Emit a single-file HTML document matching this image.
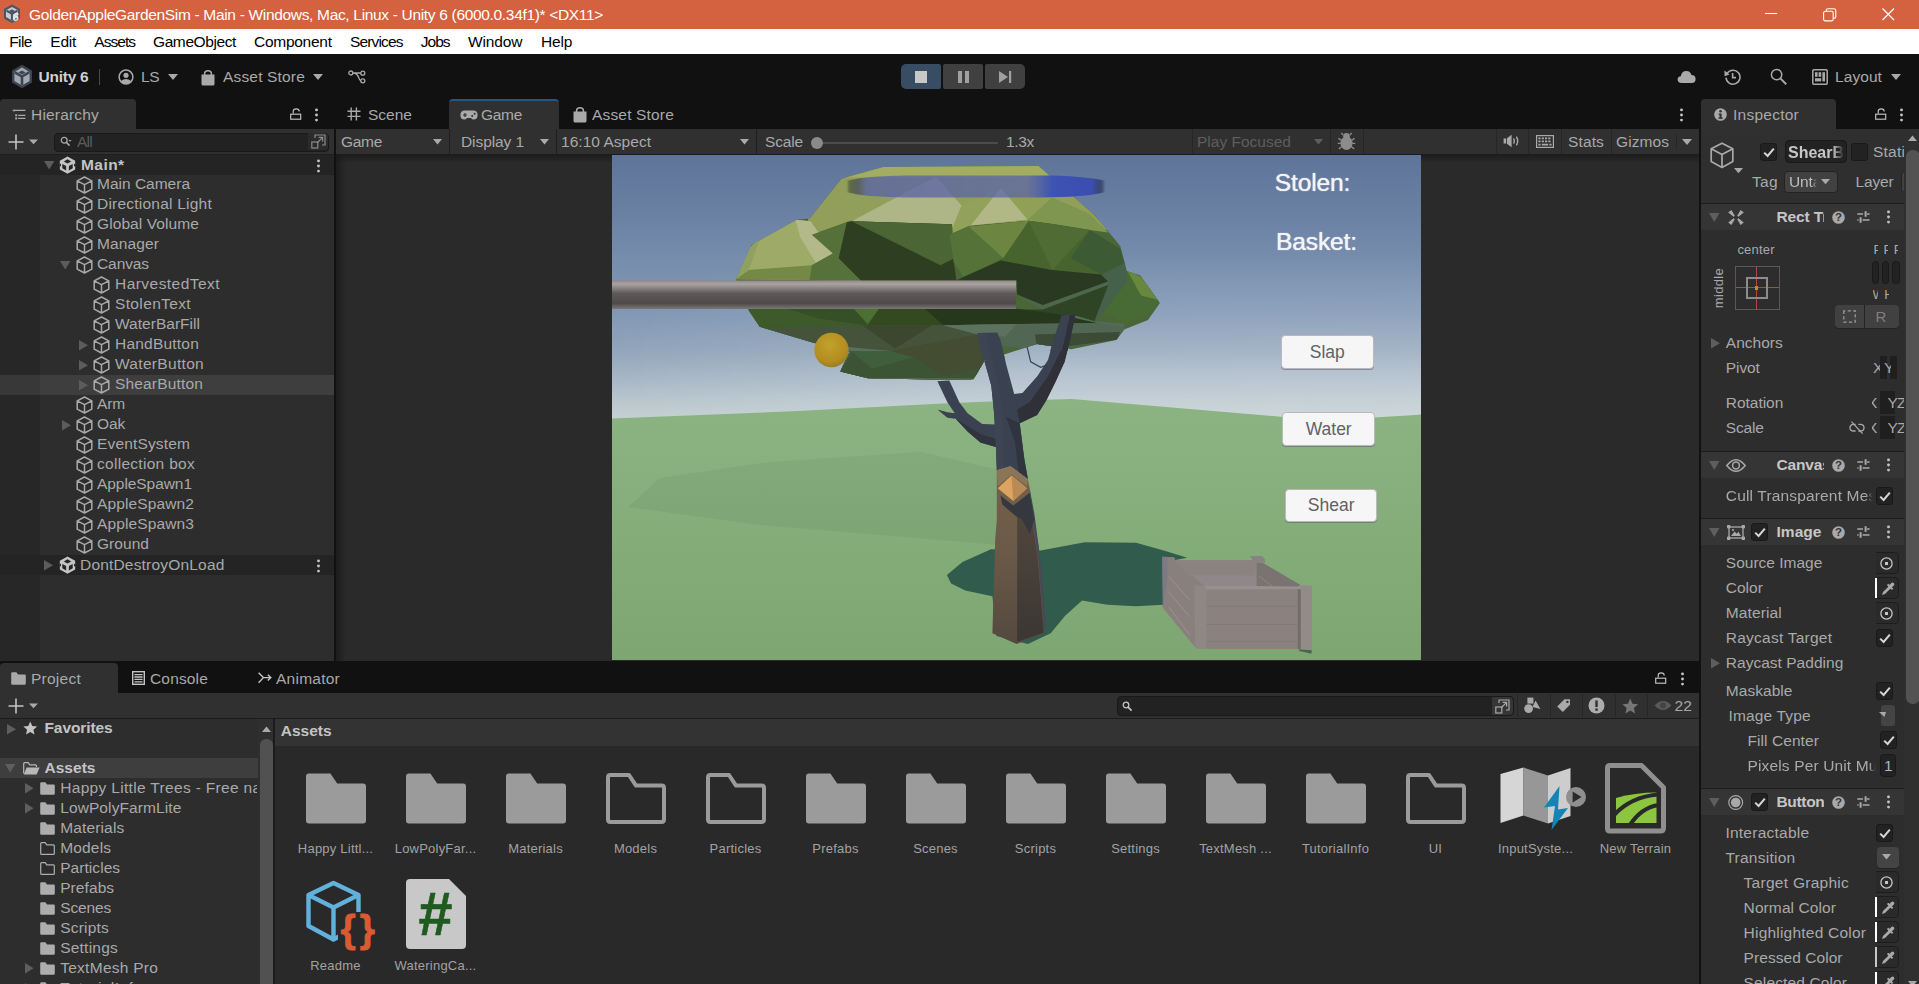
<!DOCTYPE html>
<html lang="en"><head><meta charset="utf-8"><title>GoldenAppleGardenSim - Unity 6</title><style>
html,body{margin:0;padding:0}
body{width:1919px;height:984px;overflow:hidden;background:#111111;position:relative;font-family:"Liberation Sans",sans-serif;font-size:15.5px;color:#a9a9a9}
.a{position:absolute;box-sizing:border-box}
.t{white-space:pre}
svg{overflow:visible}
</style></head><body>
<div class="a" style="left:0px;top:0px;width:1919px;height:29px;background:#d4613f;"></div>
<svg class="a" style="left:3px;top:4px;" width="20" height="20" viewBox="0 0 20 20"><polygon points="9,0.5 17,5 17,14.5 9,19 1,14.5 1,5" fill="#4a5560"/><polygon points="9,3 15,6.3 15,13 9,16.5 3,13 3,6.3" fill="#c9cdd2"/><path d="M9 9.7 L9 16 M9 9.7 L3.5 6.6 M9 9.7 L14.5 6.6" stroke="#4a5560" stroke-width="2.2" fill="none"/><polygon points="9,5.2 12,7 9,8.8 6,7" fill="#4a5560"/></svg>
<div class="a t" style="left:12.5px;top:10.5px;line-height:13px;height:13px;font-size:11px;color:#e8e8e8;font-weight:700;font-style:italic;">6</div>
<div class="a t" style="left:29px;top:0px;line-height:29px;height:29px;font-size:15.5px;color:#ffffff;letter-spacing:-0.323px;">GoldenAppleGardenSim - Main - Windows, Mac, Linux - Unity 6 (6000.0.34f1)* &lt;DX11&gt;</div>
<svg class="a" style="left:1765px;top:7px;" width="14" height="12" viewBox="0 0 14 12"><path d="M0 6.5 H12.2" stroke="#fff" stroke-width="1.1"/></svg>
<svg class="a" style="left:1823px;top:8px;" width="13" height="13" viewBox="0 0 13 13"><rect x="0.6" y="3.3" width="9.6" height="9.6" rx="1.6" fill="none" stroke="#fff" stroke-width="1.1"/><path d="M3.2 3.2 V2.4 Q3.2 0.7 4.9 0.7 H10.8 Q12.8 0.7 12.8 2.7 V8.6 Q12.8 10.3 11.1 10.3 H10.4" fill="none" stroke="#fff" stroke-width="1.1"/></svg>
<svg class="a" style="left:1882px;top:8px;" width="13" height="13" viewBox="0 0 13 13"><path d="M0.5 0.5 L12 12 M12 0.5 L0.5 12" stroke="#fff" stroke-width="1.2"/></svg>
<div class="a" style="left:0px;top:29px;width:1919px;height:25px;background:#ffffff;"></div>
<div class="a t" style="left:9.3px;top:29px;line-height:25px;height:25px;font-size:15.5px;color:#000000;letter-spacing:-0.646px;">File</div>
<div class="a t" style="left:50.3px;top:29px;line-height:25px;height:25px;font-size:15.5px;color:#000000;letter-spacing:-0.255px;">Edit</div>
<div class="a t" style="left:94.3px;top:29px;line-height:25px;height:25px;font-size:15.5px;color:#000000;letter-spacing:-0.969px;">Assets</div>
<div class="a t" style="left:153px;top:29px;line-height:25px;height:25px;font-size:15.5px;color:#000000;letter-spacing:-0.402px;">GameObject</div>
<div class="a t" style="left:254px;top:29px;line-height:25px;height:25px;font-size:15.5px;color:#000000;letter-spacing:-0.271px;">Component</div>
<div class="a t" style="left:350px;top:29px;line-height:25px;height:25px;font-size:15.5px;color:#000000;letter-spacing:-0.842px;">Services</div>
<div class="a t" style="left:420.7px;top:29px;line-height:25px;height:25px;font-size:15.5px;color:#000000;letter-spacing:-0.938px;">Jobs</div>
<div class="a t" style="left:468px;top:29px;line-height:25px;height:25px;font-size:15.5px;color:#000000;letter-spacing:-0.140px;">Window</div>
<div class="a t" style="left:541px;top:29px;line-height:25px;height:25px;font-size:15.5px;color:#000000;letter-spacing:-0.148px;">Help</div>
<div class="a" style="left:0px;top:54px;width:1919px;height:45px;background:#111111;"></div>
<svg class="a" style="left:11px;top:64px;" width="22" height="25" viewBox="0 0 22 25"><polygon points="11,0.8 21,6.5 21,18.5 11,24.2 1,18.5 1,6.5" fill="#3b4450"/><polygon points="11,3.6 18.6,8 18.6,17 11,21.4 3.4,17 3.4,8" fill="#a3a9b0"/><path d="M11 12.5 V21 M11 12.5 L3.8 8.3 M11 12.5 L18.2 8.3" stroke="#3b4450" stroke-width="2.6" fill="none"/><polygon points="11,6.4 14.6,8.5 11,10.6 7.4,8.5" fill="#3b4450"/></svg>
<div class="a t" style="left:38.5px;top:67px;line-height:20px;height:20px;font-size:15.5px;color:#d0d0d0;letter-spacing:-0.241px;font-weight:700;">Unity 6</div>
<div class="a" style="left:99px;top:69px;width:1px;height:16px;background:#4a4a4a;"></div>
<svg class="a" style="left:118px;top:69px;" width="16" height="16" viewBox="0 0 16 16"><circle cx="8" cy="8" r="6.9" fill="none" stroke="#a9a9a9" stroke-width="1.5"/><circle cx="8" cy="6.3" r="2.6" fill="#a9a9a9"/><path d="M2.6 12.3 Q8 7.5 13.4 12.3 Q8 17 2.6 12.3Z" fill="#a9a9a9"/></svg>
<div class="a t" style="left:141px;top:67px;line-height:20px;height:20px;font-size:15.5px;color:#a9a9a9;letter-spacing:-0.484px;">LS</div>
<svg class="a" style="left:167.5px;top:74px;" width="10" height="6" viewBox="0 0 10 6"><polygon points="0,0 10,0 5,6" fill="#a9a9a9"/></svg>
<svg class="a" style="left:201px;top:69.5px;" width="14" height="16" viewBox="0 0 14 16"><path d="M3.6 5 V3.6 Q3.6 0.8 7 0.8 Q10.4 0.8 10.4 3.6 V5" fill="none" stroke="#a9a9a9" stroke-width="1.5"/><path d="M0.5 4.6 H13.5 V14 Q13.5 15.5 12 15.5 H2 Q0.5 15.5 0.5 14 Z" fill="#a9a9a9"/></svg>
<div class="a t" style="left:223px;top:67px;line-height:20px;height:20px;font-size:15.5px;color:#a9a9a9;letter-spacing:0.170px;">Asset Store</div>
<svg class="a" style="left:313px;top:74px;" width="10" height="6" viewBox="0 0 10 6"><polygon points="0,0 10,0 5,6" fill="#a9a9a9"/></svg>
<svg class="a" style="left:348px;top:69.7px;" width="18" height="14" viewBox="0 0 18 14"><circle cx="2.8" cy="3" r="2" fill="none" stroke="#a9a9a9" stroke-width="1.3"/><circle cx="14.8" cy="3.2" r="2" fill="none" stroke="#a9a9a9" stroke-width="1.3"/><circle cx="14.8" cy="10.8" r="2" fill="none" stroke="#a9a9a9" stroke-width="1.3"/><path d="M4.8 3 H12.8 M6 3 Q9 3.5 10.5 7 Q11.5 10.4 12.8 10.8" fill="none" stroke="#a9a9a9" stroke-width="1.3"/></svg>
<div class="a" style="left:901px;top:64px;width:40px;height:25px;background:#384c64;border-radius:5px 2px 2px 5px;"></div>
<div class="a" style="left:943px;top:64px;width:40px;height:25px;background:#404040;border-radius:2px;"></div>
<div class="a" style="left:985px;top:64px;width:40px;height:25px;background:#404040;border-radius:2px 5px 5px 2px;"></div>
<div class="a" style="left:915px;top:71px;width:12px;height:12px;background:#c8c8c8;"></div>
<div class="a" style="left:958px;top:71px;width:4px;height:12px;background:#a0a0a0;"></div>
<div class="a" style="left:965px;top:71px;width:4px;height:12px;background:#a0a0a0;"></div>
<svg class="a" style="left:999px;top:71px;" width="13" height="12" viewBox="0 0 13 12"><polygon points="0,0 9,6 0,12" fill="#a0a0a0"/><rect x="10" y="0" width="2.2" height="12" fill="#a0a0a0"/></svg>
<svg class="a" style="left:1677px;top:70px;" width="20" height="14" viewBox="0 0 20 14"><path d="M4.6 13 Q0.6 13 0.6 9.6 Q0.6 6.6 3.8 6.2 Q4.6 1 9.4 1 Q13.4 1 14.4 5 Q18.6 5 18.6 9 Q18.6 13 14.8 13 Z" fill="#a9a9a9"/></svg>
<svg class="a" style="left:1724px;top:68px;" width="18" height="18" viewBox="0 0 18 18"><path d="M3.2 5.2 A7 7 0 1 1 2 9.6" fill="none" stroke="#a9a9a9" stroke-width="1.5"/><polygon points="0.4,2.6 5.6,6.6 0.6,8.2" fill="#a9a9a9"/><path d="M8.6 5 V9.6 H12" fill="none" stroke="#a9a9a9" stroke-width="1.6"/></svg>
<svg class="a" style="left:1770px;top:68px;" width="18" height="18" viewBox="0 0 18 18"><circle cx="6.6" cy="6.6" r="5.2" fill="none" stroke="#a9a9a9" stroke-width="1.5"/><path d="M10.4 10.4 L16.2 16.2" stroke="#a9a9a9" stroke-width="2"/></svg>
<svg class="a" style="left:1812px;top:69px;" width="16" height="16" viewBox="0 0 16 16"><rect x="0.8" y="0.8" width="14.4" height="14.4" rx="1" fill="none" stroke="#a9a9a9" stroke-width="1.5"/><rect x="3" y="3.2" width="2.6" height="4.6" fill="#a9a9a9"/><rect x="6.6" y="3.2" width="2.6" height="4.6" fill="#a9a9a9"/><rect x="3" y="9.2" width="6.2" height="3.2" fill="#a9a9a9"/><rect x="10.4" y="3.2" width="2.6" height="9.2" fill="#a9a9a9"/></svg>
<div class="a t" style="left:1835px;top:67px;line-height:20px;height:20px;font-size:15.5px;color:#a9a9a9;letter-spacing:0.076px;">Layout</div>
<svg class="a" style="left:1891px;top:74px;" width="10" height="6" viewBox="0 0 10 6"><polygon points="0,0 10,0 5,6" fill="#a9a9a9"/></svg>
<div class="a" style="left:0px;top:99px;width:136px;height:30px;background:#303030;border-radius:4px 4px 0 0;"></div>
<svg class="a" style="left:11.5px;top:109px;" width="14" height="11" viewBox="0 0 14 11"><path d="M2.6 1.4 H13.4 M6.2 6.3 H13.4 M6.2 9.4 H13.4" stroke="#a9a9a9" stroke-width="1.3"/><polygon points="0.2,1.4 2.6,0 2.6,2.8" fill="#a9a9a9"/><rect x="3.2" y="5.3" width="2" height="2" fill="#a9a9a9"/><rect x="3.2" y="8.4" width="2" height="2" fill="#a9a9a9"/></svg>
<div class="a t" style="left:31px;top:105px;line-height:20px;height:20px;font-size:15.5px;color:#a9a9a9;letter-spacing:0.186px;">Hierarchy</div>
<svg class="a" style="left:290px;top:108px;" width="12" height="12" viewBox="0 0 12 12"><path d="M3.2 5.5 V3.4 Q3.2 0.8 6.2 0.8 Q9.2 0.8 9.2 3.4" fill="none" stroke="#c4c4c4" stroke-width="1.15"/><rect x="0.7" y="6.2" width="10" height="5" fill="none" stroke="#c4c4c4" stroke-width="1.15"/></svg>
<svg class="a" style="left:315px;top:107.5px;" width="3" height="14" viewBox="0 0 3 14"><circle cx="1.5" cy="1.9" r="1.45" fill="#c4c4c4"/><circle cx="1.5" cy="7" r="1.45" fill="#c4c4c4"/><circle cx="1.5" cy="12.1" r="1.45" fill="#c4c4c4"/></svg>
<div class="a" style="left:0px;top:129px;width:334px;height:25px;background:#303030;"></div>
<div class="a" style="left:0px;top:154px;width:334px;height:1px;background:#1e1e1e;"></div>
<svg class="a" style="left:8px;top:134px;" width="30" height="16" viewBox="0 0 30 16"><path d="M8 0.5 V15.5 M0.5 8 H15.5" stroke="#c4c4c4" stroke-width="1.6"/><polygon points="21,5.4 30,5.4 25.5,10.2" fill="#a9a9a9"/></svg>
<div class="a" style="left:54px;top:132.5px;width:275px;height:19.5px;background:#222222;border:1px solid #191919;border-radius:4px;"></div>
<svg class="a" style="left:60px;top:136px;" width="12" height="12" viewBox="0 0 12 12"><circle cx="4.2" cy="4.2" r="2.9" fill="none" stroke="#a9a9a9" stroke-width="1.3"/><path d="M6.4 6.4 L9.6 9.6" stroke="#a9a9a9" stroke-width="1.5"/><polygon points="8.4,4 11.6,4 10,5.8" fill="#a9a9a9"/></svg>
<div class="a t" style="left:77px;top:132px;line-height:20px;height:20px;font-size:15.5px;color:#5c5c5c;letter-spacing:-0.745px;">All</div>
<div class="a" style="left:308px;top:133px;width:20px;height:17px;background:#2b2b2b;border-radius:0 3px 3px 0;"></div>
<svg class="a" style="left:311px;top:134px;" width="15" height="15" viewBox="0 0 15 15"><path d="M4 4 V1 H14 V11 H11" fill="none" stroke="#8c8c8c" stroke-width="1.2"/><rect x="0.8" y="8" width="6" height="6" fill="none" stroke="#8c8c8c" stroke-width="1.2"/><path d="M6 9 L11.4 3.6 M7.6 3.4 H11.6 V7.4" fill="none" stroke="#8c8c8c" stroke-width="1.2"/></svg>
<div class="a" style="left:0px;top:155px;width:334px;height:506px;background:#2d2d2d;"></div>
<div class="a" style="left:0px;top:155px;width:40px;height:506px;background:#272727;"></div>
<div class="a" style="left:0px;top:155px;width:334px;height:20px;background:#242424;"></div>
<svg class="a" style="left:43.5px;top:161px;" width="10.4" height="8.6" viewBox="0 0 10.4 8.6"><polygon points="0,0 10.4,0 5.2,8.6" fill="#5c5c5c"/></svg>
<svg class="a" style="left:59px;top:156px;" width="17" height="18" viewBox="0 0 17 18"><polygon points="8.5,0.4 16.2,4.8 16.2,13.4 8.5,17.8 0.8,13.4 0.8,4.8" fill="#c4c4c4"/><g fill="#242424"><polygon points="8.5,3.3 12.2,5.4 8.5,7.5 4.8,5.4"/><polygon points="3.3,7.9 7.1,10.1 7.1,14.4 3.3,12.2"/><polygon points="13.7,7.9 9.9,10.1 9.9,14.4 13.7,12.2"/><polygon points="0.6,7.4 0.6,10.8 2,10 2,8.2"/><polygon points="16.4,7.4 16.4,10.8 15,10 15,8.2"/></g></svg>
<div class="a t" style="left:81px;top:155px;line-height:20px;height:20px;font-size:15.5px;color:#c4c4c4;letter-spacing:0.431px;font-weight:700;">Main*</div>
<svg class="a" style="left:317px;top:158.5px;" width="3" height="14" viewBox="0 0 3 14"><circle cx="1.5" cy="1.9" r="1.45" fill="#c4c4c4"/><circle cx="1.5" cy="7" r="1.45" fill="#c4c4c4"/><circle cx="1.5" cy="12.1" r="1.45" fill="#c4c4c4"/></svg>
<svg class="a" style="left:76px;top:176px;" width="17.0" height="18.0" viewBox="0 0 17 18"><path d="M8.5 1 L15.8 4.8 V13.2 L8.5 17 L1.2 13.2 V4.8 Z M1.2 4.8 L8.5 8.6 L15.8 4.8 M8.5 8.6 V17" fill="none" stroke="#a9a9a9" stroke-width="1.5" stroke-linejoin="round"/></svg>
<div class="a t" style="left:97px;top:174px;line-height:20px;height:20px;font-size:15.5px;color:#a9a9a9;letter-spacing:-0.003px;">Main Camera</div>
<svg class="a" style="left:76px;top:196px;" width="17.0" height="18.0" viewBox="0 0 17 18"><path d="M8.5 1 L15.8 4.8 V13.2 L8.5 17 L1.2 13.2 V4.8 Z M1.2 4.8 L8.5 8.6 L15.8 4.8 M8.5 8.6 V17" fill="none" stroke="#a9a9a9" stroke-width="1.5" stroke-linejoin="round"/></svg>
<div class="a t" style="left:97px;top:194px;line-height:20px;height:20px;font-size:15.5px;color:#a9a9a9;letter-spacing:0.226px;">Directional Light</div>
<svg class="a" style="left:76px;top:216px;" width="17.0" height="18.0" viewBox="0 0 17 18"><path d="M8.5 1 L15.8 4.8 V13.2 L8.5 17 L1.2 13.2 V4.8 Z M1.2 4.8 L8.5 8.6 L15.8 4.8 M8.5 8.6 V17" fill="none" stroke="#a9a9a9" stroke-width="1.5" stroke-linejoin="round"/></svg>
<div class="a t" style="left:97px;top:214px;line-height:20px;height:20px;font-size:15.5px;color:#a9a9a9;letter-spacing:0.091px;">Global Volume</div>
<svg class="a" style="left:76px;top:236px;" width="17.0" height="18.0" viewBox="0 0 17 18"><path d="M8.5 1 L15.8 4.8 V13.2 L8.5 17 L1.2 13.2 V4.8 Z M1.2 4.8 L8.5 8.6 L15.8 4.8 M8.5 8.6 V17" fill="none" stroke="#a9a9a9" stroke-width="1.5" stroke-linejoin="round"/></svg>
<div class="a t" style="left:97px;top:234px;line-height:20px;height:20px;font-size:15.5px;color:#a9a9a9;letter-spacing:0.116px;">Manager</div>
<svg class="a" style="left:60px;top:260.5px;" width="10.4" height="8.6" viewBox="0 0 10.4 8.6"><polygon points="0,0 10.4,0 5.2,8.6" fill="#5c5c5c"/></svg>
<svg class="a" style="left:76px;top:256px;" width="17.0" height="18.0" viewBox="0 0 17 18"><path d="M8.5 1 L15.8 4.8 V13.2 L8.5 17 L1.2 13.2 V4.8 Z M1.2 4.8 L8.5 8.6 L15.8 4.8 M8.5 8.6 V17" fill="none" stroke="#a9a9a9" stroke-width="1.5" stroke-linejoin="round"/></svg>
<div class="a t" style="left:97px;top:254px;line-height:20px;height:20px;font-size:15.5px;color:#a9a9a9;letter-spacing:-0.094px;">Canvas</div>
<svg class="a" style="left:93px;top:276px;" width="17.0" height="18.0" viewBox="0 0 17 18"><path d="M8.5 1 L15.8 4.8 V13.2 L8.5 17 L1.2 13.2 V4.8 Z M1.2 4.8 L8.5 8.6 L15.8 4.8 M8.5 8.6 V17" fill="none" stroke="#a9a9a9" stroke-width="1.5" stroke-linejoin="round"/></svg>
<div class="a t" style="left:115px;top:274px;line-height:20px;height:20px;font-size:15.5px;color:#a9a9a9;letter-spacing:0.456px;">HarvestedText</div>
<svg class="a" style="left:93px;top:296px;" width="17.0" height="18.0" viewBox="0 0 17 18"><path d="M8.5 1 L15.8 4.8 V13.2 L8.5 17 L1.2 13.2 V4.8 Z M1.2 4.8 L8.5 8.6 L15.8 4.8 M8.5 8.6 V17" fill="none" stroke="#a9a9a9" stroke-width="1.5" stroke-linejoin="round"/></svg>
<div class="a t" style="left:115px;top:294px;line-height:20px;height:20px;font-size:15.5px;color:#a9a9a9;letter-spacing:0.361px;">StolenText</div>
<svg class="a" style="left:93px;top:316px;" width="17.0" height="18.0" viewBox="0 0 17 18"><path d="M8.5 1 L15.8 4.8 V13.2 L8.5 17 L1.2 13.2 V4.8 Z M1.2 4.8 L8.5 8.6 L15.8 4.8 M8.5 8.6 V17" fill="none" stroke="#a9a9a9" stroke-width="1.5" stroke-linejoin="round"/></svg>
<div class="a t" style="left:115px;top:314px;line-height:20px;height:20px;font-size:15.5px;color:#a9a9a9;letter-spacing:0.026px;">WaterBarFill</div>
<svg class="a" style="left:79px;top:339.5px;" width="9" height="10.4" viewBox="0 0 9 10.4"><polygon points="0,0 9,5.2 0,10.4" fill="#5c5c5c"/></svg>
<svg class="a" style="left:93px;top:336px;" width="17.0" height="18.0" viewBox="0 0 17 18"><path d="M8.5 1 L15.8 4.8 V13.2 L8.5 17 L1.2 13.2 V4.8 Z M1.2 4.8 L8.5 8.6 L15.8 4.8 M8.5 8.6 V17" fill="none" stroke="#a9a9a9" stroke-width="1.5" stroke-linejoin="round"/></svg>
<div class="a t" style="left:115px;top:334px;line-height:20px;height:20px;font-size:15.5px;color:#a9a9a9;letter-spacing:0.212px;">HandButton</div>
<svg class="a" style="left:79px;top:359.5px;" width="9" height="10.4" viewBox="0 0 9 10.4"><polygon points="0,0 9,5.2 0,10.4" fill="#5c5c5c"/></svg>
<svg class="a" style="left:93px;top:356px;" width="17.0" height="18.0" viewBox="0 0 17 18"><path d="M8.5 1 L15.8 4.8 V13.2 L8.5 17 L1.2 13.2 V4.8 Z M1.2 4.8 L8.5 8.6 L15.8 4.8 M8.5 8.6 V17" fill="none" stroke="#a9a9a9" stroke-width="1.5" stroke-linejoin="round"/></svg>
<div class="a t" style="left:115px;top:354px;line-height:20px;height:20px;font-size:15.5px;color:#a9a9a9;letter-spacing:0.311px;">WaterButton</div>
<div class="a" style="left:0px;top:375px;width:334px;height:20px;background:#3e3e3e;"></div>
<div class="a" style="left:0px;top:375px;width:40px;height:20px;background:#383838;"></div>
<svg class="a" style="left:79px;top:379.5px;" width="9" height="10.4" viewBox="0 0 9 10.4"><polygon points="0,0 9,5.2 0,10.4" fill="#5c5c5c"/></svg>
<svg class="a" style="left:93px;top:376px;" width="17.0" height="18.0" viewBox="0 0 17 18"><path d="M8.5 1 L15.8 4.8 V13.2 L8.5 17 L1.2 13.2 V4.8 Z M1.2 4.8 L8.5 8.6 L15.8 4.8 M8.5 8.6 V17" fill="none" stroke="#a9a9a9" stroke-width="1.5" stroke-linejoin="round"/></svg>
<div class="a t" style="left:115px;top:374px;line-height:20px;height:20px;font-size:15.5px;color:#a9a9a9;letter-spacing:0.165px;">ShearButton</div>
<svg class="a" style="left:76px;top:396px;" width="17.0" height="18.0" viewBox="0 0 17 18"><path d="M8.5 1 L15.8 4.8 V13.2 L8.5 17 L1.2 13.2 V4.8 Z M1.2 4.8 L8.5 8.6 L15.8 4.8 M8.5 8.6 V17" fill="none" stroke="#a9a9a9" stroke-width="1.5" stroke-linejoin="round"/></svg>
<div class="a t" style="left:97px;top:394px;line-height:20px;height:20px;font-size:15.5px;color:#a9a9a9;letter-spacing:-0.141px;">Arm</div>
<svg class="a" style="left:62px;top:419.5px;" width="9" height="10.4" viewBox="0 0 9 10.4"><polygon points="0,0 9,5.2 0,10.4" fill="#5c5c5c"/></svg>
<svg class="a" style="left:76px;top:416px;" width="17.0" height="18.0" viewBox="0 0 17 18"><path d="M8.5 1 L15.8 4.8 V13.2 L8.5 17 L1.2 13.2 V4.8 Z M1.2 4.8 L8.5 8.6 L15.8 4.8 M8.5 8.6 V17" fill="none" stroke="#a9a9a9" stroke-width="1.5" stroke-linejoin="round"/></svg>
<div class="a t" style="left:97px;top:414px;line-height:20px;height:20px;font-size:15.5px;color:#a9a9a9;letter-spacing:-0.146px;">Oak</div>
<svg class="a" style="left:76px;top:436px;" width="17.0" height="18.0" viewBox="0 0 17 18"><path d="M8.5 1 L15.8 4.8 V13.2 L8.5 17 L1.2 13.2 V4.8 Z M1.2 4.8 L8.5 8.6 L15.8 4.8 M8.5 8.6 V17" fill="none" stroke="#a9a9a9" stroke-width="1.5" stroke-linejoin="round"/></svg>
<div class="a t" style="left:97px;top:434px;line-height:20px;height:20px;font-size:15.5px;color:#a9a9a9;letter-spacing:0.153px;">EventSystem</div>
<svg class="a" style="left:76px;top:456px;" width="17.0" height="18.0" viewBox="0 0 17 18"><path d="M8.5 1 L15.8 4.8 V13.2 L8.5 17 L1.2 13.2 V4.8 Z M1.2 4.8 L8.5 8.6 L15.8 4.8 M8.5 8.6 V17" fill="none" stroke="#a9a9a9" stroke-width="1.5" stroke-linejoin="round"/></svg>
<div class="a t" style="left:97px;top:454px;line-height:20px;height:20px;font-size:15.5px;color:#a9a9a9;letter-spacing:0.291px;">collection box</div>
<svg class="a" style="left:76px;top:476px;" width="17.0" height="18.0" viewBox="0 0 17 18"><path d="M8.5 1 L15.8 4.8 V13.2 L8.5 17 L1.2 13.2 V4.8 Z M1.2 4.8 L8.5 8.6 L15.8 4.8 M8.5 8.6 V17" fill="none" stroke="#a9a9a9" stroke-width="1.5" stroke-linejoin="round"/></svg>
<div class="a t" style="left:97px;top:474px;line-height:20px;height:20px;font-size:15.5px;color:#a9a9a9;letter-spacing:-0.061px;">AppleSpawn1</div>
<svg class="a" style="left:76px;top:496px;" width="17.0" height="18.0" viewBox="0 0 17 18"><path d="M8.5 1 L15.8 4.8 V13.2 L8.5 17 L1.2 13.2 V4.8 Z M1.2 4.8 L8.5 8.6 L15.8 4.8 M8.5 8.6 V17" fill="none" stroke="#a9a9a9" stroke-width="1.5" stroke-linejoin="round"/></svg>
<div class="a t" style="left:97px;top:494px;line-height:20px;height:20px;font-size:15.5px;color:#a9a9a9;letter-spacing:0.121px;">AppleSpawn2</div>
<svg class="a" style="left:76px;top:516px;" width="17.0" height="18.0" viewBox="0 0 17 18"><path d="M8.5 1 L15.8 4.8 V13.2 L8.5 17 L1.2 13.2 V4.8 Z M1.2 4.8 L8.5 8.6 L15.8 4.8 M8.5 8.6 V17" fill="none" stroke="#a9a9a9" stroke-width="1.5" stroke-linejoin="round"/></svg>
<div class="a t" style="left:97px;top:514px;line-height:20px;height:20px;font-size:15.5px;color:#a9a9a9;letter-spacing:0.121px;">AppleSpawn3</div>
<svg class="a" style="left:76px;top:536px;" width="17.0" height="18.0" viewBox="0 0 17 18"><path d="M8.5 1 L15.8 4.8 V13.2 L8.5 17 L1.2 13.2 V4.8 Z M1.2 4.8 L8.5 8.6 L15.8 4.8 M8.5 8.6 V17" fill="none" stroke="#a9a9a9" stroke-width="1.5" stroke-linejoin="round"/></svg>
<div class="a t" style="left:97px;top:534px;line-height:20px;height:20px;font-size:15.5px;color:#a9a9a9;letter-spacing:0.049px;">Ground</div>
<div class="a" style="left:0px;top:555px;width:334px;height:20px;background:#242424;"></div>
<svg class="a" style="left:44px;top:560px;" width="9" height="10.4" viewBox="0 0 9 10.4"><polygon points="0,0 9,5.2 0,10.4" fill="#5c5c5c"/></svg>
<svg class="a" style="left:59px;top:556px;" width="17" height="18" viewBox="0 0 17 18"><polygon points="8.5,0.4 16.2,4.8 16.2,13.4 8.5,17.8 0.8,13.4 0.8,4.8" fill="#c4c4c4"/><g fill="#242424"><polygon points="8.5,3.3 12.2,5.4 8.5,7.5 4.8,5.4"/><polygon points="3.3,7.9 7.1,10.1 7.1,14.4 3.3,12.2"/><polygon points="13.7,7.9 9.9,10.1 9.9,14.4 13.7,12.2"/><polygon points="0.6,7.4 0.6,10.8 2,10 2,8.2"/><polygon points="16.4,7.4 16.4,10.8 15,10 15,8.2"/></g></svg>
<div class="a t" style="left:80px;top:555px;line-height:20px;height:20px;font-size:15.5px;color:#a9a9a9;letter-spacing:0.188px;">DontDestroyOnLoad</div>
<svg class="a" style="left:317px;top:558.5px;" width="3" height="14" viewBox="0 0 3 14"><circle cx="1.5" cy="1.9" r="1.45" fill="#c4c4c4"/><circle cx="1.5" cy="7" r="1.45" fill="#c4c4c4"/><circle cx="1.5" cy="12.1" r="1.45" fill="#c4c4c4"/></svg>
<svg class="a" style="left:347px;top:107px;" width="14" height="14" viewBox="0 0 14 14"><path d="M4.2 0.5 V13.5 M9.4 0.5 V13.5 M0.5 4.2 H13.5 M0.5 9.4 H13.5" stroke="#a9a9a9" stroke-width="1.4"/></svg>
<div class="a t" style="left:368px;top:105px;line-height:20px;height:20px;font-size:15.5px;color:#a9a9a9;letter-spacing:0.009px;">Scene</div>
<div class="a" style="left:449px;top:99px;width:110px;height:30px;background:#303030;border-radius:4px 4px 0 0;border-top:2px solid #2a5580;"></div>
<svg class="a" style="left:460px;top:110px;" width="18" height="10" viewBox="0 0 18 10"><path d="M4.6 0.4 H13.4 Q17.6 0.4 17.6 5 Q17.6 9.6 13.6 9.6 Q12 9.6 11 8 H7 Q6 9.6 4.4 9.6 Q0.4 9.6 0.4 5 Q0.4 0.4 4.6 0.4Z" fill="#a9a9a9"/><path d="M3 5 H7 M5 3 V7" stroke="#303030" stroke-width="1.2"/><circle cx="12.2" cy="6" r="1" fill="#303030"/><circle cx="14.6" cy="3.8" r="1" fill="#303030"/></svg>
<div class="a t" style="left:481px;top:105px;line-height:20px;height:20px;font-size:15.5px;color:#a9a9a9;letter-spacing:-0.305px;">Game</div>
<svg class="a" style="left:573px;top:107px;" width="14" height="16" viewBox="0 0 14 16"><path d="M3.6 5 V3.6 Q3.6 0.8 7 0.8 Q10.4 0.8 10.4 3.6 V5" fill="none" stroke="#a9a9a9" stroke-width="1.5"/><path d="M0.5 4.6 H13.5 V14 Q13.5 15.5 12 15.5 H2 Q0.5 15.5 0.5 14 Z" fill="#a9a9a9"/></svg>
<div class="a t" style="left:592px;top:105px;line-height:20px;height:20px;font-size:15.5px;color:#a9a9a9;letter-spacing:0.170px;">Asset Store</div>
<svg class="a" style="left:1680px;top:107.5px;" width="3" height="14" viewBox="0 0 3 14"><circle cx="1.5" cy="1.9" r="1.45" fill="#c4c4c4"/><circle cx="1.5" cy="7" r="1.45" fill="#c4c4c4"/><circle cx="1.5" cy="12.1" r="1.45" fill="#c4c4c4"/></svg>
<div class="a" style="left:336px;top:129px;width:1363px;height:25px;background:#303030;"></div>
<div class="a" style="left:336px;top:154px;width:1363px;height:1px;background:#1c1c1c;"></div>
<div class="a t" style="left:341px;top:132px;line-height:20px;height:20px;font-size:15.5px;color:#a9a9a9;letter-spacing:-0.305px;">Game</div>
<svg class="a" style="left:433px;top:139px;" width="9" height="6" viewBox="0 0 9 6"><polygon points="0,0 9,0 4.5,5.5" fill="#a9a9a9"/></svg>
<div class="a" style="left:449px;top:129px;width:1px;height:25px;background:#1f1f1f;"></div>
<div class="a t" style="left:461px;top:132px;line-height:20px;height:20px;font-size:15.5px;color:#a9a9a9;letter-spacing:-0.083px;">Display 1</div>
<svg class="a" style="left:540px;top:139px;" width="9" height="6" viewBox="0 0 9 6"><polygon points="0,0 9,0 4.5,5.5" fill="#a9a9a9"/></svg>
<div class="a" style="left:556px;top:129px;width:1px;height:25px;background:#1f1f1f;"></div>
<div class="a t" style="left:561px;top:132px;line-height:20px;height:20px;font-size:15.5px;color:#a9a9a9;letter-spacing:0.031px;">16:10 Aspect</div>
<svg class="a" style="left:740px;top:139px;" width="9" height="6" viewBox="0 0 9 6"><polygon points="0,0 9,0 4.5,5.5" fill="#a9a9a9"/></svg>
<div class="a" style="left:756px;top:129px;width:1px;height:25px;background:#1f1f1f;"></div>
<div class="a t" style="left:765px;top:132px;line-height:20px;height:20px;font-size:15.5px;color:#a9a9a9;letter-spacing:-0.156px;">Scale</div>
<div class="a" style="left:817px;top:142px;width:181px;height:2px;background:#4c4c4c;border-radius:1px;"></div>
<div class="a" style="left:811px;top:137px;width:12px;height:12px;background:#8a8a8a;border-radius:6px;"></div>
<div class="a t" style="left:1006px;top:132px;line-height:20px;height:20px;font-size:15.5px;color:#a9a9a9;letter-spacing:-0.328px;">1.3x</div>
<div class="a" style="left:1192px;top:129px;width:1px;height:25px;background:#262626;"></div>
<div class="a t" style="left:1197px;top:132px;line-height:20px;height:20px;font-size:15.5px;color:#5e5e5e;letter-spacing:0.007px;">Play Focused</div>
<svg class="a" style="left:1314px;top:139px;" width="9" height="6" viewBox="0 0 9 6"><polygon points="0,0 9,0 4.5,5.5" fill="#5e5e5e"/></svg>
<div class="a" style="left:1330px;top:129px;width:1px;height:25px;background:#262626;"></div>
<svg class="a" style="left:1337px;top:132px;" width="19" height="19" viewBox="0 0 19 19"><ellipse cx="9.5" cy="11.2" rx="6" ry="6.8" fill="#8c8c8c"/><circle cx="9.5" cy="4.4" r="3.3" fill="#8c8c8c"/><path d="M6 3 L4.4 0.8 M13 3 L14.6 0.8 M4.6 8.4 L1.4 6.4 M14.4 8.4 L17.6 6.4 M4.2 11.4 H0.8 M14.8 11.4 H18.2 M4.8 14.4 L1.8 17 M14.2 14.4 L17.2 17" stroke="#8c8c8c" stroke-width="1.3" fill="none"/></svg>
<div class="a" style="left:1363px;top:129px;width:1px;height:25px;background:#262626;"></div>
<div class="a" style="left:1496px;top:129px;width:1px;height:25px;background:#262626;"></div>
<svg class="a" style="left:1503px;top:134px;" width="18" height="14" viewBox="0 0 18 14"><path d="M0.6 4.4 H3.2 V9.6 H0.6Z M4 4.2 L8.6 0.8 V13.2 L4 9.8 Z" fill="#a9a9a9"/><path d="M10.6 4.4 Q12.2 7 10.6 9.6 M13.4 2.6 Q16 7 13.4 11.4" fill="none" stroke="#a9a9a9" stroke-width="1.4"/></svg>
<div class="a" style="left:1528px;top:129px;width:1px;height:25px;background:#262626;"></div>
<svg class="a" style="left:1536px;top:135px;" width="18" height="13" viewBox="0 0 18 13"><rect x="0.6" y="0.6" width="16.8" height="11.8" fill="none" stroke="#a9a9a9" stroke-width="1.2"/><path d="M2.4 3.4 H15.6 M2.4 6.4 H15.6" stroke="#a9a9a9" stroke-width="1.6" stroke-dasharray="2.2 1.1"/><path d="M2.4 9.6 H4.6 M5.8 9.6 H12.2 M13.4 9.6 H15.6" stroke="#a9a9a9" stroke-width="1.6"/></svg>
<div class="a" style="left:1561px;top:129px;width:1px;height:25px;background:#262626;"></div>
<div class="a t" style="left:1568px;top:132px;line-height:20px;height:20px;font-size:15.5px;color:#a9a9a9;letter-spacing:0.134px;">Stats</div>
<div class="a" style="left:1611px;top:129px;width:1px;height:25px;background:#262626;"></div>
<div class="a t" style="left:1616px;top:132px;line-height:20px;height:20px;font-size:15.5px;color:#a9a9a9;letter-spacing:0.076px;">Gizmos</div>
<div class="a" style="left:1676px;top:134px;width:1px;height:15px;background:#262626;"></div>
<svg class="a" style="left:1682px;top:139px;" width="10" height="6" viewBox="0 0 10 6"><polygon points="0,0 10,0 5,6" fill="#a9a9a9"/></svg>
<div class="a" style="left:336px;top:155px;width:1363px;height:506px;background:#2a2a2a;background:linear-gradient(#1d1d1d 0,#2a2a2a 8px);"></div>
<div class="a" style="left:336px;top:155px;width:10px;height:506px;background:transparent;background:linear-gradient(90deg,rgba(24,24,24,.75) 0,rgba(42,42,42,0) 100%);"></div>
<svg class="a" style="left:0px;top:0px;pointer-events:none;" width="1919" height="984" viewBox="0 0 1919 984"><defs><linearGradient id="sky" x1="0" y1="0" x2="0" y2="1"><stop offset="0" stop-color="#5e7599"/><stop offset="0.22" stop-color="#6a81a4"/><stop offset="0.38" stop-color="#768dad"/><stop offset="0.57" stop-color="#8198b4"/><stop offset="0.71" stop-color="#92a5bb"/><stop offset="0.82" stop-color="#a9b8c6"/><stop offset="0.89" stop-color="#b8c6ce"/><stop offset="0.95" stop-color="#c3cfd2"/><stop offset="1" stop-color="#c5d1d3"/></linearGradient><linearGradient id="gnd" x1="0" y1="0" x2="0" y2="1"><stop offset="0" stop-color="#8bb482"/><stop offset="0.5" stop-color="#84ad7a"/><stop offset="1" stop-color="#7da672"/></linearGradient><linearGradient id="arm" x1="0" y1="0" x2="0" y2="1"><stop offset="0" stop-color="#8e8888"/><stop offset="0.12" stop-color="#aaa3a2"/><stop offset="0.45" stop-color="#5f5a5a"/><stop offset="0.8" stop-color="#4e4a4a"/><stop offset="1" stop-color="#7d7676"/></linearGradient><linearGradient id="trunk" x1="0" y1="0" x2="0" y2="1"><stop offset="0" stop-color="#75624d"/><stop offset="0.5" stop-color="#6a5947"/><stop offset="1" stop-color="#54493f"/></linearGradient><linearGradient id="trunk2" x1="0" y1="0" x2="0" y2="1"><stop offset="0" stop-color="#52463d"/><stop offset="1" stop-color="#3b3733"/></linearGradient><radialGradient id="apple" cx="0.45" cy="0.35" r="0.7"><stop offset="0" stop-color="#c2a22b"/><stop offset="0.7" stop-color="#b38d20"/><stop offset="1" stop-color="#94782c"/></radialGradient><linearGradient id="wbar" x1="0" y1="0" x2="1" y2="0"><stop offset="0" stop-color="#3f4438" stop-opacity="0.55"/><stop offset="0.035" stop-color="#474d55" stop-opacity="0.75"/><stop offset="0.075" stop-color="#5a63a6" stop-opacity="0.78"/><stop offset="0.7" stop-color="#5a64aa" stop-opacity="0.72"/><stop offset="0.8" stop-color="#3d52b4"/><stop offset="0.95" stop-color="#3a50b0"/><stop offset="0.985" stop-color="#34406f" stop-opacity="0.9"/><stop offset="1" stop-color="#3a4050" stop-opacity="0.5"/></linearGradient><linearGradient id="skyh" x1="0" y1="0" x2="1" y2="0"><stop offset="0" stop-color="#fff" stop-opacity="0"/><stop offset="0.55" stop-color="#fff" stop-opacity="0.2"/><stop offset="1" stop-color="#fff" stop-opacity="0.22"/></linearGradient><linearGradient id="skyv" x1="0" y1="0" x2="0" y2="1"><stop offset="0" stop-color="#000"/><stop offset="0.35" stop-color="#000"/><stop offset="0.8" stop-color="#fff"/><stop offset="1" stop-color="#bbb"/></linearGradient><mask id="skym" maskUnits="userSpaceOnUse" x="612" y="155" width="809" height="275"><rect x="612" y="155" width="809" height="275" fill="url(#skyv)"/></mask><filter id="b1"><feGaussianBlur stdDeviation="1.3 0.6"/></filter></defs><rect x="612" y="155" width="809" height="275" fill="url(#sky)"/><rect x="612" y="155" width="809" height="275" fill="url(#skyh)" mask="url(#skym)"/><path d="M612 418.6 L798 411 L933 404 Q1010 400.2 1072 399 L1290 417.4 Q1335 421 1421 414.5 V660 H612 Z" fill="url(#gnd)"/><polygon points="628.0,507.0 660.0,478.0 770.0,462.0 920.0,452.0 1000.0,470.0 1000.0,545.0 760.0,525.0" fill="rgba(60,90,60,0.07)" /><polygon points="946.9,574.9 962.5,562.1 991.0,549.3 1039.3,550.7 1084.8,542.2 1136.0,542.7 1164.5,550.7 1187.3,557.8 1164.5,562.1 1163.1,604.8 1136.0,606.2 1107.6,604.8 1082.0,600.5 1064.9,616.1 1050.7,633.2 1027.9,644.0 996.6,636.0 992.4,596.2 965.3,590.5 951.1,583.4" fill="#315b4c" /><polygon points="1061.5,315.4 1075.6,314.3 1070.0,340.0 1064.5,361.9 1055.4,382.1 1046.2,400.4 1037.1,415.0 1019.7,423.2 1006.0,416.8 1014.2,394.0 1022.4,393.0 1037.1,376.6 1048.0,360.1 1053.5,340.0" fill="#3a4150" /><polygon points="1070.0,340.0 1064.5,361.9 1055.4,382.1 1046.2,400.4 1037.1,415.0 1019.7,423.2 1007.8,415.0 1029.7,402.2 1048.0,376.6 1060.8,351.0 1064.5,340.0" fill="#2f3038" /><polygon points="937.4,381.2 949.3,380.6 959.3,402.2 967.6,413.2 982.2,424.1 995.9,424.5 995.9,447.0 980.4,442.4 967.6,431.5 955.7,418.7 947.4,417.7 937.4,409.5 947.4,412.3 954.8,413.2 947.4,402.2" fill="#3a4150" /><polygon points="955.7,418.7 967.6,426.0 982.2,435.1 995.9,438.8 995.9,447.0 980.4,442.4 967.6,431.5" fill="#30343f" /><path d="M1027.0 346.4 L1030.7 361.9 L1040.7 367.4 L1045.3 365.6" stroke="#3a4150" stroke-width="1.2" fill="none"/><polygon points="977.4,333.0 997.3,332.5 1000.5,340.0 1006.0,363.8 1014.2,394.0 1019.7,423.2 1024.3,458.9 1027.9,479.0 1010.5,466.2 996.8,470.2 995.9,446.1 994.1,413.2 991.3,385.7 978.5,340.0" fill="#3a4150" /><polygon points="1006.0,416.8 1019.7,423.2 1024.3,458.9 1027.9,479.0 1018.8,472.6 1015.1,442.4" fill="#30343f" /><polygon points="977.4,333.0 985.0,333.0 986.8,340.0 998.7,385.7 1002.3,416.8 1003.2,468.0 996.8,470.2 995.9,446.1 994.1,413.2 991.3,385.7 978.5,340.0" fill="#3d4555" /><polygon points="996.8,470.2 1010.5,466.2 1027.9,479.0 1029.7,490.0 1034.3,520.0 1039.3,550.7 1044.4,633.2 1016.6,644.0 992.4,633.2 995.2,539.3 996.8,520.0" fill="url(#trunk)" /><polygon points="996.8,470.2 1010.5,466.2 1027.9,479.0 1027.0,486.3 1011.5,474.4 997.7,486.3" fill="#8b7558" /><polygon points="1017.1,507.1 1031.7,514.9 1038.4,565.2 1043.5,632.8 1017.1,641.7" fill="url(#trunk2)" /><polygon points="1029.0,484.7 1032.1,513.8 1038.8,565.2 1044.0,632.8 1046.0,623.8 1041.1,565.2 1034.4,513.8" fill="#474a55" /><polygon points="1000.5,495.5 1013.3,505.5 1029.7,492.7 1034.3,520.0 1029.7,533.9 1022.4,520.0 1015.1,515.6 1002.3,504.6" fill="#363840" /><polygon points="1011.5,475.4 1027.0,488.2 1013.3,501.0 997.7,488.2" fill="#dca45e" /><polygon points="1011.5,475.4 1027.0,488.2 1013.3,501.0" fill="#b98a55" /><clipPath id="fol"><polygon points="883.8,166.9 1038.4,166.1 1095.2,215.8 1120.3,246.1 1126.9,271.2 1140.1,275.2 1159.9,303.0 1148.0,320.1 1124.2,329.4 1116.3,339.9 1071.4,349.2 1037.0,343.9 984.2,361.1 973.6,379.6 931.4,379.6 868.0,378.2 840.2,371.6 849.5,351.8 812.5,342.6 759.6,326.7 749.1,310.9 735.9,279.2 751.7,244.8 796.6,219.7 809.8,218.4 841.5,178.8"/></clipPath><polygon points="883.8,166.9 1038.4,166.1 1095.2,215.8 1120.3,246.1 1126.9,271.2 1140.1,275.2 1159.9,303.0 1148.0,320.1 1124.2,329.4 1116.3,339.9 1071.4,349.2 1037.0,343.9 984.2,361.1 973.6,379.6 931.4,379.6 868.0,378.2 840.2,371.6 849.5,351.8 812.5,342.6 759.6,326.7 749.1,310.9 735.9,279.2 751.7,244.8 796.6,219.7 809.8,218.4 841.5,178.8" fill="#4a6638" /><g clip-path="url(#fol)"><polygon points="800.1,164.7 1047.5,164.7 1108.3,230.1 1028.8,220.8 970.4,225.5 949.4,234.8 952.1,224.3 851.6,220.8 811.8,234.8 807.1,216.1" fill="#929f5a" /><polygon points="842.2,164.7 1040.5,164.7 1049.9,176.4 842.2,177.5" fill="#a3ad62" /><polygon points="936.0,176.6 851.6,221.2 952.1,224.3 949.4,230.1 968.0,213.0" fill="#aeb587" /><polygon points="970.4,225.5 1000.8,187.6 1027.7,219.6" fill="#b2b787" /><polygon points="961.0,206.8 1000.8,187.6 970.4,225.5 949.4,234.8" fill="#93a25b" /><polygon points="1000.8,187.6 1052.2,197.4 1027.7,219.6" fill="#90a057" /><polygon points="1052.2,197.4 1089.6,213.8 1108.3,232.5 1089.6,230.1 1027.7,219.6" fill="#7f9650" /><polygon points="735.8,279.2 748.7,248.8 760.4,237.1 795.5,219.8 810.6,221.2 832.9,253.5 856.2,276.9 860.9,280.4" fill="#9eaa68" /><polygon points="795.5,219.8 810.6,221.2 832.9,253.5 816.5,264.0 800.1,237.1" fill="#b3b98a" /><polygon points="735.8,279.2 748.7,269.9 811.8,265.2 832.9,253.5 860.9,280.4" fill="#748946" /><polygon points="811.8,265.2 832.9,253.5 860.9,280.4 809.5,280.4" fill="#56723a" /><polygon points="735.8,279.2 748.7,248.8 760.4,237.1 748.7,269.9" fill="#8fa060" /><polygon points="811.8,234.8 846.9,221.9 838.7,258.2 832.9,253.5" fill="#56703a" /><polygon points="846.9,221.9 851.6,221.2 952.1,224.3 949.4,234.8 954.0,262.9 956.4,280.4 860.9,280.4 838.7,258.2" fill="#2d3e21" /><polygon points="851.6,221.2 952.1,224.3 954.4,258.2 940.4,265.2" fill="#4b6634" /><polygon points="949.4,234.8 968.1,226.6 1028.8,220.8 1089.6,230.1 1120.0,248.8 1124.7,262.9 1101.3,274.5 1052.2,269.9 1000.8,260.5 963.4,276.9 954.0,262.9" fill="#48642e" /><polygon points="968.1,226.6 1028.8,220.8 1003.1,258.2" fill="#6c8642" /><polygon points="949.4,234.8 968.1,226.6 1003.1,258.2 963.4,276.9 954.0,262.9" fill="#557238" /><polygon points="1028.8,220.8 1089.6,230.1 1052.2,269.9" fill="#506c34" /><polygon points="1089.6,230.1 1120.0,248.8 1124.7,262.9 1101.3,274.5 1070.9,258.2" fill="#3c5a34" /><polygon points="963.4,276.9 1000.8,260.5 1052.2,269.9 1101.3,274.5 1108.3,281.6 1042.9,304.9 1017.1,294.4 1017.1,280.4 956.4,280.4" fill="#2a3a22" /><polygon points="1101.3,274.5 1124.7,262.9 1127.0,281.6 1103.6,311.9 1094.3,321.3 1108.3,281.6" fill="#45614c" /><polygon points="1017.1,295.6 1042.9,305.4 1108.3,281.6 1108.3,285.1 1042.9,309.6" fill="#4d6650" /><polygon points="1127.0,269.9 1141.0,276.9 1159.7,300.3 1150.4,314.3 1124.7,323.6 1103.6,311.9 1127.0,281.6" fill="#486a34" /><polygon points="1127.0,269.9 1141.0,276.9 1159.7,300.3 1141.0,295.6" fill="#68883f" /><polygon points="748.7,309.6 1017.1,309.6 1042.9,309.6 1108.3,285.1 1094.3,321.3 1070.9,314.3 1056.9,323.6 940.4,323.6 762.7,328.3" fill="#2e4424" /><polygon points="748.7,309.6 874.9,309.6 865.6,323.6 762.7,328.3" fill="#3c5829" /><polygon points="851.6,309.6 879.6,309.6 866.7,324.8" fill="#48662f" /><polygon points="762.7,328.3 940.4,323.6 1056.9,323.6 1070.9,314.3 1094.3,321.3 1124.7,323.6 1117.7,337.7 1070.9,347.0 1010.1,344.7 1005.5,340.0 982.1,333.0 984.4,370.4 970.4,379.7 960.0,380.9 860.9,378.6 839.9,372.7 846.9,351.7 816.5,344.7" fill="#47604a" /><polygon points="846.9,351.7 893.6,349.3 960.0,337.7 982.1,333.0 984.4,370.4 970.4,379.7 960.0,380.9 860.9,378.6 839.9,372.7" fill="#3d5636" /><polygon points="846.9,351.7 893.6,349.3 917.0,379.7 860.9,378.6 839.9,372.7" fill="#46624a" /><polygon points="940.0,324.8 1056.9,323.6 1070.9,314.3 1094.3,321.3 1124.7,323.6 1117.7,337.7 1070.9,347.0 1010.1,344.7 1005.5,340.0 982.1,333.0" fill="#536c53" /><polygon points="743.8,308.7 936.4,308.7 943.3,325.2 867.6,325.7 759.8,328.0" fill="#3d5a2b" /><polygon points="787.3,308.7 858.4,308.7 867.6,325.7 817.2,318.3" fill="#355026" /><polygon points="853.9,308.7 879.1,308.7 867.6,324.1" fill="#4b7031" /><polygon points="879.1,308.7 936.4,308.7 943.3,325.2 867.6,325.7" fill="#33491f" /><polygon points="925.0,308.7 1016.7,308.7 1055.7,313.8 1097.0,322.9 943.3,325.2" fill="#26381c" /><polygon points="759.8,328.0 867.6,325.7 943.3,325.2 977.7,334.4 890.6,350.9 814.9,344.0" fill="#46533b" /><polygon points="863.0,325.7 931.8,325.2 895.1,348.6" fill="#3b472f" /><polygon points="752.9,327.1 759.8,328.0 814.9,344.0 890.6,350.9 888.3,354.1 813.7,347.2" fill="#5b6f5e" /><polygon points="840.1,371.6 851.6,351.8 890.6,350.9 977.7,334.4 985.7,367.0 970.8,379.8 867.6,379.8" fill="#3c5334" /><polygon points="890.6,350.9 977.7,334.4 985.7,367.0 943.3,375.7 913.5,357.3" fill="#444d31" /><polygon points="851.6,351.8 890.6,350.9 913.5,357.3 872.2,368.8" fill="#3f5f3c" /><polygon points="837.8,372.9 867.6,378.0 970.8,378.4 970.8,381.7 865.3,381.7" fill="#5a6e5e" /><polygon points="943.3,325.2 1097.0,322.9 1125.6,327.5 1117.6,339.4 1069.4,346.3 1037.3,349.5 1005.2,346.3 977.7,334.4" fill="#526654" /><polygon points="1035.0,334.4 1119.9,332.1 1117.6,339.4 1069.4,346.3 1037.3,349.5" fill="#3b4b35" /><polygon points="943.3,325.2 1016.7,324.1 1005.2,336.7 977.7,334.4" fill="#5d715f" /></g><polygon points="977.4,333.0 997.3,332.5 1000.5,340.0 1005.1,360.1 983.1,360.1 978.5,340.0" fill="#3a4150" /><polygon points="977.4,333.0 985.0,333.0 986.8,340.0 991.7,360.1 983.1,360.1 978.5,340.0" fill="#3d4555" /><polygon points="1061.5,315.4 1075.6,314.3 1070.0,340.0 1067.2,351.0 1050.2,351.0 1053.5,340.0" fill="#3a4150" /><polygon points="1070.0,314.6 1075.6,314.3 1070.0,340.0 1067.2,351.0 1061.8,351.0 1064.5,340.0" fill="#2f3038" /><rect x="612" y="280.5" width="404" height="28.5" fill="url(#arm)"/><circle cx="831.5" cy="350" r="17.2" fill="url(#apple)"/><path d="M848 180.6 C860 177 885 175.4 915 175.4 L1040 175.4 C1070 175.4 1092 177.4 1104 180.6 L1104 192.2 C1092 195.6 1070 197.4 1040 197.4 L915 197.4 C885 197.4 860 196 848 192.2 Z" fill="url(#wbar)" filter="url(#b1)"/><polygon points="1300.8,649.0 1311.9,649.6 1311.3,653.7 1298.4,650.8" fill="#3f6b4a" /><polygon points="1162.3,556.7 1174.5,557.3 1175.1,560.2 1204.9,585.9 1206.1,588.8 1206.1,649.0 1196.8,649.0 1189.7,640.8 1162.9,608.1" fill="#89807d" /><polygon points="1162.3,556.7 1167.5,556.9 1167.5,580.1 1162.9,608.1" fill="#7d7a86" /><polygon points="1175.1,560.2 1256.4,560.2 1256.4,586.5 1204.9,586.5" fill="#90878a" /><polygon points="1175.1,560.2 1256.4,560.2 1255.2,575.6 1189.2,575.2" fill="#8c8380" /><polygon points="1256.4,562.5 1262.2,562.5 1300.8,585.3 1297.3,587.1 1256.4,586.5" fill="#7b7371" /><polygon points="1249.9,556.1 1262.2,556.1 1265.1,559.6 1265.1,562.5 1256.4,562.5 1252.9,560.2" fill="#8a8280" /><polygon points="1206.1,588.8 1298.7,588.8 1298.7,649.0 1206.1,649.0" fill="#8b827f" /><polygon points="1204.9,585.9 1297.3,586.5 1300.8,585.3 1311.9,585.9 1311.9,589.2 1206.1,589.4" fill="#979090" /><polygon points="1194.4,585.3 1204.9,585.9 1206.1,588.8 1206.1,649.0 1196.8,649.0 1195.0,644.3" fill="#8f8785" /><polygon points="1300.8,585.3 1311.9,585.9 1311.9,650.2 1300.8,649.6" fill="#938b89" /><polygon points="1297.8,589.2 1300.8,589.2 1300.8,649.4 1297.8,649.0" fill="#736b6a" /><path d="M1206.6 606.4 L1297.5 606.4" stroke="#7f7775" stroke-width="0.7"/><path d="M1206.6 624.5 L1297.5 624.5" stroke="#7f7775" stroke-width="0.7"/><path d="M1206.6 641.4 L1297.5 641.4" stroke="#7f7775" stroke-width="0.7"/><path d="M1168.7 576.6 L1189.7 599.9" stroke="#a39b98" stroke-width="0.7"/><path d="M1168.7 591.8 L1189.7 616.9" stroke="#a39b98" stroke-width="0.7"/><path d="M1168.7 606.9 L1189.7 635.0" stroke="#a39b98" stroke-width="0.7"/><path d="M1258.7 576.0 L1272.7 586.5" stroke="#968e8c" stroke-width="0.7"/></svg>
<div class="a t" style="left:1274.8px;top:168.7px;line-height:28px;height:28px;font-size:24.6px;color:#f4f4f6;letter-spacing:-0.168px;text-shadow:0 0 1px #fff;">Stolen:</div>
<div class="a t" style="left:1276px;top:227.7px;line-height:28px;height:28px;font-size:24.6px;color:#f4f4f6;letter-spacing:-0.147px;text-shadow:0 0 1px #fff;">Basket:</div>
<div class="a" style="left:1281px;top:334.5px;width:92.5px;height:34px;background:#f6f6f7;border-radius:4px;border:1px solid #b9b9bd;box-shadow:0 1px 0 rgba(90,90,100,.5);"></div>
<div class="a t" style="left:1281px;top:334.5px;width:92.5px;height:34px;line-height:34px;text-align:center;font-size:17.5px;color:#626262">Slap</div>
<div class="a" style="left:1282.2px;top:412px;width:93px;height:34px;background:#f6f6f7;border-radius:4px;border:1px solid #b9b9bd;box-shadow:0 1px 0 rgba(90,90,100,.5);"></div>
<div class="a t" style="left:1282.2px;top:412px;width:93px;height:34px;line-height:34px;text-align:center;font-size:17.5px;color:#626262">Water</div>
<div class="a" style="left:1285.2px;top:488.7px;width:92px;height:33.5px;background:#f6f6f7;border-radius:4px;border:1px solid #b9b9bd;box-shadow:0 1px 0 rgba(90,90,100,.5);"></div>
<div class="a t" style="left:1285.2px;top:488.7px;width:92px;height:33.5px;line-height:33.5px;text-align:center;font-size:17.5px;color:#626262">Shear</div>
<div class="a" style="left:1701px;top:99px;width:135px;height:30px;background:#303030;border-radius:4px 4px 0 0;"></div>
<svg class="a" style="left:1714px;top:108px;" width="13" height="13" viewBox="0 0 13 13"><circle cx="6.5" cy="6.5" r="6.3" fill="#a9a9a9"/><rect x="5.5" y="5.6" width="2.1" height="4.8" fill="#303030"/><rect x="4.6" y="5.6" width="2" height="1.2" fill="#303030"/><rect x="4.4" y="9.6" width="4.4" height="1.2" fill="#303030"/><circle cx="6.5" cy="3.3" r="1.2" fill="#303030"/></svg>
<div class="a t" style="left:1733px;top:105px;line-height:20px;height:20px;font-size:15.5px;color:#a9a9a9;letter-spacing:0.248px;">Inspector</div>
<svg class="a" style="left:1875px;top:108px;" width="12" height="12" viewBox="0 0 12 12"><path d="M3.2 5.5 V3.4 Q3.2 0.8 6.2 0.8 Q9.2 0.8 9.2 3.4" fill="none" stroke="#c4c4c4" stroke-width="1.15"/><rect x="0.7" y="6.2" width="10" height="5" fill="none" stroke="#c4c4c4" stroke-width="1.15"/></svg>
<svg class="a" style="left:1900px;top:107.5px;" width="3" height="14" viewBox="0 0 3 14"><circle cx="1.5" cy="1.9" r="1.45" fill="#c4c4c4"/><circle cx="1.5" cy="7" r="1.45" fill="#c4c4c4"/><circle cx="1.5" cy="12.1" r="1.45" fill="#c4c4c4"/></svg>
<div class="a" style="left:1701px;top:129px;width:218px;height:855px;background:#2d2d2d;"></div>
<div class="a" style="left:1701px;top:129px;width:218px;height:74px;background:#2f2f2f;"></div>
<div class="a" style="left:1904px;top:129px;width:15px;height:855px;background:#2f2f2f;"></div>
<svg class="a" style="left:1908px;top:135px;" width="9" height="6" viewBox="0 0 9 6"><polygon points="0,6 9,6 4.5,0.5" fill="#a9a9a9"/></svg>
<div class="a" style="left:1906px;top:150px;width:13px;height:554px;background:#535353;border-radius:6px 0 0 6px / 7px 0 0 7px;border-radius:6.5px;width:14px;"></div>
<svg class="a" style="left:1908px;top:981px;" width="9" height="6" viewBox="0 0 9 6"><polygon points="0,0 9,0 4.5,5.5" fill="#a9a9a9"/></svg>
<svg class="a" style="left:1710px;top:142px;" width="24" height="27" viewBox="0 0 24 27"><path d="M12 1.2 L22.8 6.8 V19.6 L12 25.4 L1.2 19.6 V6.8 Z M1.2 6.8 L12 12.6 L22.8 6.8 M12 12.6 V25.4" fill="none" stroke="#a9a9a9" stroke-width="1.7" stroke-linejoin="round"/></svg>
<svg class="a" style="left:1734px;top:168px;" width="9" height="6" viewBox="0 0 9 6"><polygon points="0,0 9,0 4.5,5.2" fill="#a9a9a9"/></svg>
<div class="a" style="left:1760px;top:143px;width:17px;height:17.5px;background:#222222;border:1px solid #191919;border-radius:3px;"></div>
<svg class="a" style="left:1762.5px;top:146.5px;" width="12" height="11" viewBox="0 0 12 11"><path d="M1.2 5.6 L4.6 9 L10.8 1.6" fill="none" stroke="#d6d6d6" stroke-width="2"/></svg>
<div class="a" style="left:1785px;top:140px;width:62px;height:23px;background:#222222;border:1px solid #191919;border-radius:4px;"></div>
<div class="a t" style="left:1788px;top:142px;line-height:21px;height:21px;font-size:16px;color:#c6c6c6;font-weight:700;width:56px;overflow:hidden;-webkit-mask-image:linear-gradient(90deg,#000 80%,transparent);mask-image:linear-gradient(90deg,#000 80%,transparent);">ShearButton</div>
<div class="a" style="left:1851px;top:143px;width:17px;height:17.5px;background:#222222;border:1px solid #191919;border-radius:3px;"></div>
<div class="a t" style="left:1873px;top:142px;line-height:20px;height:20px;font-size:15.5px;color:#a9a9a9;letter-spacing:0.206px;width:31px;overflow:hidden;">Static</div>
<div class="a t" style="left:1752px;top:172px;line-height:20px;height:20px;font-size:15.5px;color:#a9a9a9;letter-spacing:0.333px;">Tag</div>
<div class="a" style="left:1784px;top:171px;width:54px;height:21.5px;background:#414141;border:1px solid #232323;border-radius:4px;"></div>
<div class="a t" style="left:1789px;top:171px;line-height:21px;height:21px;font-size:15.5px;color:#bdbdbd;letter-spacing:-0.154px;width:28px;overflow:hidden;-webkit-mask-image:linear-gradient(90deg,#000 82%,transparent);mask-image:linear-gradient(90deg,#000 82%,transparent);">Untagged</div>
<svg class="a" style="left:1821px;top:179px;" width="9" height="6" viewBox="0 0 9 6"><polygon points="0,0 9,0 4.5,5.2" fill="#a9a9a9"/></svg>
<div class="a t" style="left:1855.6px;top:172px;line-height:20px;height:20px;font-size:15.5px;color:#a9a9a9;letter-spacing:-0.156px;">Layer</div>
<div class="a" style="left:1900.5px;top:171px;width:10px;height:21.5px;background:#414141;border:1px solid #232323;border-radius:4px 0 0 4px;clip-path:inset(0 6.5px 0 0);"></div>
<div class="a" style="left:1701px;top:203px;width:203px;height:1px;background:#1c1c1c;"></div>
<div class="a" style="left:1701px;top:204px;width:203px;height:26px;background:#353535;"></div>
<svg class="a" style="left:1708.6px;top:213px;" width="10.5" height="9" viewBox="0 0 10.5 9"><polygon points="0,0 10.5,0 5.25,9" fill="#5e5e5e"/></svg>
<svg class="a" style="left:1728px;top:209.5px;" width="16" height="15" viewBox="0 0 16 15"><g fill="#a9a9a9"><polygon points="0.2,2.6 3.4,0 6.8,5.8 5.6,6.8"/><polygon points="15.8,2.6 12.6,0 9.2,5.8 10.4,6.8"/><polygon points="0.2,12.4 3.4,15 6.8,9.2 5.6,8.2"/><polygon points="15.8,12.4 12.6,15 9.2,9.2 10.4,8.2"/></g></svg>
<div class="a t" style="left:1776.5px;top:207px;line-height:20px;height:20px;font-size:15.5px;color:#c6c6c6;letter-spacing:-0.122px;font-weight:700;width:47px;overflow:hidden;">Rect Transform</div>
<svg class="a" style="left:1831.5px;top:210.5px;" width="13" height="13" viewBox="0 0 13 13"><circle cx="6.5" cy="6.5" r="6.3" fill="#a9a9a9"/></svg>
<div class="a t" style="left:1835px;top:210px;line-height:14px;height:14px;font-size:11.5px;color:#353535;font-weight:700;">?</div>
<svg class="a" style="left:1857px;top:211px;" width="13" height="12" viewBox="0 0 13 12"><path d="M0.3 3 H6 M10 3 H12.5 M0.3 9 H1.6 M5.6 9 H12.5" stroke="#a9a9a9" stroke-width="1.3"/><path d="M8.6 0.2 V5.8 M3.6 6.2 V11.8" stroke="#a9a9a9" stroke-width="2"/></svg>
<svg class="a" style="left:1886.5px;top:210.0px;" width="3" height="14" viewBox="0 0 3 14"><circle cx="1.5" cy="1.9" r="1.45" fill="#c4c4c4"/><circle cx="1.5" cy="7" r="1.45" fill="#c4c4c4"/><circle cx="1.5" cy="12.1" r="1.45" fill="#c4c4c4"/></svg>
<div class="a t" style="left:1737.4px;top:241px;line-height:18px;height:18px;font-size:13px;color:#a9a9a9;letter-spacing:0.227px;">center</div>
<div class="a t" style="left:1689px;top:278px;width:60px;height:20px;line-height:20px;font-size:13px;transform:rotate(-90deg);text-align:center;letter-spacing:0.35px">middle</div>
<div class="a" style="left:1735px;top:266px;width:44.5px;height:44px;background:transparent;border:1px solid #595959;"></div>
<div class="a" style="left:1735.5px;top:287px;width:43px;height:1px;background:#b84444;"></div>
<div class="a" style="left:1756px;top:266.5px;width:1px;height:43px;background:#b84444;"></div>
<div class="a" style="left:1746px;top:277px;width:21.5px;height:21.5px;background:transparent;border:2px solid #8c8c8c;"></div>
<div class="a" style="left:1754.8px;top:286px;width:3.4px;height:3.8px;background:#c89000;"></div>
<div class="a t" style="left:1873.6px;top:241px;line-height:18px;height:18px;font-size:13px;color:#a9a9a9;width:4.4px;overflow:hidden;">Pos X</div>
<div class="a" style="left:1872.0px;top:261px;width:7.4px;height:22.5px;background:#222222;border:1px solid #191919;border-radius:3.5px;"></div>
<div class="a t" style="left:1883.6px;top:241px;line-height:18px;height:18px;font-size:13px;color:#a9a9a9;width:4.4px;overflow:hidden;">Pos Y</div>
<div class="a" style="left:1882.0px;top:261px;width:7.4px;height:22.5px;background:#222222;border:1px solid #191919;border-radius:3.5px;"></div>
<div class="a t" style="left:1893.8px;top:241px;line-height:18px;height:18px;font-size:13px;color:#a9a9a9;width:4.4px;overflow:hidden;">Pos Z</div>
<div class="a" style="left:1892.2px;top:261px;width:7.4px;height:22.5px;background:#222222;border:1px solid #191919;border-radius:3.5px;"></div>
<div class="a t" style="left:1872.5px;top:286px;line-height:18px;height:18px;font-size:13px;color:#a9a9a9;width:5.2px;overflow:hidden;">Width</div>
<div class="a t" style="left:1884.2px;top:286px;line-height:18px;height:18px;font-size:13px;color:#a9a9a9;width:4.6px;overflow:hidden;">Height</div>
<div class="a" style="left:1835px;top:305px;width:63.5px;height:23px;background:#414141;border-radius:4px;box-shadow:0 1px 0 #232323;"></div>
<div class="a" style="left:1864px;top:305px;width:1px;height:23px;background:#232323;"></div>
<svg class="a" style="left:1843px;top:310px;" width="13" height="13" viewBox="0 0 13 13"><rect x="0.8" y="0.8" width="11.4" height="11.4" fill="none" stroke="#9a9a9a" stroke-width="1.3" stroke-dasharray="3.2 2.3" stroke-dashoffset="1.6"/></svg>
<div class="a t" style="left:1875.5px;top:306px;line-height:21px;height:21px;font-size:15px;color:#7e7e7e;">R</div>
<svg class="a" style="left:1711px;top:337.5px;" width="9" height="10.5" viewBox="0 0 9 10.5"><polygon points="0,0 9,5.25 0,10.5" fill="#5e5e5e"/></svg>
<div class="a t" style="left:1725.8px;top:333px;line-height:20px;height:20px;font-size:15.5px;color:#a9a9a9;letter-spacing:0.018px;">Anchors</div>
<div class="a t" style="left:1725.8px;top:358px;line-height:20px;height:20px;font-size:15.5px;color:#a9a9a9;letter-spacing:-0.094px;">Pivot</div>
<div class="a t" style="left:1873px;top:358px;line-height:20px;height:20px;font-size:15.5px;color:#a9a9a9;width:7px;overflow:hidden;">X</div>
<div class="a" style="left:1880px;top:356px;width:7px;height:22.5px;background:#1f1f1f;"></div>
<div class="a" style="left:1890px;top:356px;width:7px;height:22.5px;background:#1f1f1f;"></div>
<div class="a t" style="left:1884px;top:358px;line-height:20px;height:20px;font-size:15.5px;color:#a9a9a9;width:6.5px;overflow:hidden;">Y</div>
<div class="a t" style="left:1725.8px;top:393px;line-height:20px;height:20px;font-size:15.5px;color:#a9a9a9;letter-spacing:-0.029px;">Rotation</div>
<div class="a t" style="left:1725.8px;top:418px;line-height:20px;height:20px;font-size:15.5px;color:#a9a9a9;letter-spacing:-0.156px;">Scale</div>
<div class="a t" style="left:1872px;top:393px;line-height:20px;height:20px;font-size:15.5px;color:#a9a9a9;width:8px;overflow:hidden;text-indent:-5px;">X</div>
<div class="a" style="left:1880px;top:391px;width:15px;height:22.5px;background:#1f1f1f;"></div>
<div class="a t" style="left:1887.6px;top:393px;line-height:20px;height:20px;font-size:15.5px;color:#a9a9a9;letter-spacing:-0.906px;width:16.4px;overflow:hidden;">YZ</div>
<div class="a t" style="left:1872px;top:418px;line-height:20px;height:20px;font-size:15.5px;color:#a9a9a9;width:8px;overflow:hidden;text-indent:-5px;">X</div>
<div class="a" style="left:1880px;top:416px;width:15px;height:22.5px;background:#1f1f1f;"></div>
<div class="a t" style="left:1887.6px;top:418px;line-height:20px;height:20px;font-size:15.5px;color:#a9a9a9;letter-spacing:-0.906px;width:16.4px;overflow:hidden;">YZ</div>
<svg class="a" style="left:1849px;top:421px;" width="16" height="13" viewBox="0 0 16 13"><path d="M6.6 3.4 H4.8 Q1 3.4 1 6.7 Q1 10 4.8 10 H6.6 M9.4 3.4 H11.2 Q15 3.4 15 6.7 Q15 10 11.2 10 H9.4" fill="none" stroke="#a9a9a9" stroke-width="1.3"/><path d="M2.4 0.6 L13.6 12.6" stroke="#a9a9a9" stroke-width="1.3"/></svg>
<div class="a" style="left:1701px;top:451px;width:203px;height:1px;background:#1c1c1c;"></div>
<div class="a" style="left:1701px;top:452px;width:203px;height:26px;background:#353535;"></div>
<svg class="a" style="left:1708.6px;top:461px;" width="10.5" height="9" viewBox="0 0 10.5 9"><polygon points="0,0 10.5,0 5.25,9" fill="#5e5e5e"/></svg>
<svg class="a" style="left:1726px;top:457.5px;" width="20" height="15" viewBox="0 0 20 15"><path d="M0.8 7.5 Q10 -4.2 19.2 7.5 Q10 19.2 0.8 7.5Z" fill="none" stroke="#a9a9a9" stroke-width="1.5"/><circle cx="10" cy="7.5" r="3.4" fill="none" stroke="#a9a9a9" stroke-width="1.5"/></svg>
<div class="a t" style="left:1776.5px;top:455px;line-height:20px;height:20px;font-size:15.5px;color:#c6c6c6;letter-spacing:-0.168px;font-weight:700;width:47px;overflow:hidden;">Canvas Renderer</div>
<svg class="a" style="left:1831.5px;top:458.5px;" width="13" height="13" viewBox="0 0 13 13"><circle cx="6.5" cy="6.5" r="6.3" fill="#a9a9a9"/></svg>
<div class="a t" style="left:1835px;top:458px;line-height:14px;height:14px;font-size:11.5px;color:#353535;font-weight:700;">?</div>
<svg class="a" style="left:1857px;top:459px;" width="13" height="12" viewBox="0 0 13 12"><path d="M0.3 3 H6 M10 3 H12.5 M0.3 9 H1.6 M5.6 9 H12.5" stroke="#a9a9a9" stroke-width="1.3"/><path d="M8.6 0.2 V5.8 M3.6 6.2 V11.8" stroke="#a9a9a9" stroke-width="2"/></svg>
<svg class="a" style="left:1886.5px;top:458.0px;" width="3" height="14" viewBox="0 0 3 14"><circle cx="1.5" cy="1.9" r="1.45" fill="#c4c4c4"/><circle cx="1.5" cy="7" r="1.45" fill="#c4c4c4"/><circle cx="1.5" cy="12.1" r="1.45" fill="#c4c4c4"/></svg>
<div class="a t" style="left:1725.8px;top:486px;line-height:20px;height:20px;font-size:15.5px;color:#a9a9a9;letter-spacing:0.163px;width:147.5px;overflow:hidden;-webkit-mask-image:linear-gradient(90deg,#000 95%,transparent);mask-image:linear-gradient(90deg,#000 95%,transparent);">Cull Transparent Mesh</div>
<div class="a" style="left:1876px;top:487px;width:17px;height:17.5px;background:#222222;border:1px solid #191919;border-radius:3px;"></div>
<svg class="a" style="left:1878.5px;top:490.5px;" width="12" height="11" viewBox="0 0 12 11"><path d="M1.2 5.6 L4.6 9 L10.8 1.6" fill="none" stroke="#d6d6d6" stroke-width="2"/></svg>
<div class="a" style="left:1701px;top:518px;width:203px;height:1px;background:#1c1c1c;"></div>
<div class="a" style="left:1701px;top:519px;width:203px;height:26px;background:#353535;"></div>
<svg class="a" style="left:1708.6px;top:528px;" width="10.5" height="9" viewBox="0 0 10.5 9"><polygon points="0,0 10.5,0 5.25,9" fill="#5e5e5e"/></svg>
<svg class="a" style="left:1727px;top:524.5px;" width="18" height="15" viewBox="0 0 18 15"><rect x="2" y="2" width="14" height="11" fill="none" stroke="#a9a9a9" stroke-width="1.3"/><g fill="#a9a9a9"><rect x="0" y="0" width="3.4" height="3.4" rx="0.8"/><rect x="14.6" y="0" width="3.4" height="3.4" rx="0.8"/><rect x="0" y="11.6" width="3.4" height="3.4" rx="0.8"/><rect x="14.6" y="11.6" width="3.4" height="3.4" rx="0.8"/><polygon points="4,11 7.6,6.6 9.6,8.8 11.4,6.8 14,11"/><circle cx="6" cy="5" r="1.1"/></g></svg>
<div class="a" style="left:1751px;top:523px;width:17px;height:17.5px;background:#222222;border:1px solid #191919;border-radius:3px;"></div>
<svg class="a" style="left:1753.5px;top:526.5px;" width="12" height="11" viewBox="0 0 12 11"><path d="M1.2 5.6 L4.6 9 L10.8 1.6" fill="none" stroke="#d6d6d6" stroke-width="2"/></svg>
<div class="a t" style="left:1776.5px;top:522px;line-height:20px;height:20px;font-size:15.5px;color:#c6c6c6;letter-spacing:0.037px;font-weight:700;">Image</div>
<svg class="a" style="left:1831.5px;top:525.5px;" width="13" height="13" viewBox="0 0 13 13"><circle cx="6.5" cy="6.5" r="6.3" fill="#a9a9a9"/></svg>
<div class="a t" style="left:1835px;top:525px;line-height:14px;height:14px;font-size:11.5px;color:#353535;font-weight:700;">?</div>
<svg class="a" style="left:1857px;top:526px;" width="13" height="12" viewBox="0 0 13 12"><path d="M0.3 3 H6 M10 3 H12.5 M0.3 9 H1.6 M5.6 9 H12.5" stroke="#a9a9a9" stroke-width="1.3"/><path d="M8.6 0.2 V5.8 M3.6 6.2 V11.8" stroke="#a9a9a9" stroke-width="2"/></svg>
<svg class="a" style="left:1886.5px;top:525.0px;" width="3" height="14" viewBox="0 0 3 14"><circle cx="1.5" cy="1.9" r="1.45" fill="#c4c4c4"/><circle cx="1.5" cy="7" r="1.45" fill="#c4c4c4"/><circle cx="1.5" cy="12.1" r="1.45" fill="#c4c4c4"/></svg>
<div class="a t" style="left:1725.8px;top:553px;line-height:20px;height:20px;font-size:15.5px;color:#a9a9a9;letter-spacing:0.000px;">Source Image</div>
<div class="a" style="left:1870px;top:551.5px;width:28.5px;height:22px;background:#2a2a2a;border:1px solid #1d1d1d;border-radius:4px;clip-path:inset(-2px -2px -2px 6px);"></div>
<svg class="a" style="left:1879.5px;top:556.5px;" width="13" height="13" viewBox="0 0 13 13"><circle cx="6.5" cy="6.5" r="5.6" fill="none" stroke="#c6c6c6" stroke-width="1.3"/><rect x="5" y="5" width="3" height="3" fill="#c6c6c6"/></svg>
<div class="a t" style="left:1725.8px;top:578px;line-height:20px;height:20px;font-size:15.5px;color:#a9a9a9;letter-spacing:-0.009px;">Color</div>
<div class="a" style="left:1875px;top:577.5px;width:2.2px;height:20px;background:#ffffff;"></div>
<div class="a" style="left:1870px;top:576.5px;width:28.5px;height:22px;background:#2a2a2a;border:1px solid #1d1d1d;border-radius:4px;clip-path:inset(-2px -2px -2px 7.2px);"></div>
<svg class="a" style="left:1881px;top:580.5px;" width="14" height="15" viewBox="0 0 14 15"><path d="M1 14 L2 11 L7.6 5.4 L9.6 7.4 L4 13 Z" fill="#a9a9a9"/><path d="M6.6 3.4 L11.6 8.4" stroke="#a9a9a9" stroke-width="2"/><path d="M9 5.8 L11.6 3.2" stroke="#a9a9a9" stroke-width="3.4" stroke-linecap="round"/></svg>
<div class="a t" style="left:1725.8px;top:603px;line-height:20px;height:20px;font-size:15.5px;color:#a9a9a9;letter-spacing:0.107px;">Material</div>
<div class="a" style="left:1870px;top:601.5px;width:28.5px;height:22px;background:#2a2a2a;border:1px solid #1d1d1d;border-radius:4px;clip-path:inset(-2px -2px -2px 6px);"></div>
<svg class="a" style="left:1879.5px;top:606.5px;" width="13" height="13" viewBox="0 0 13 13"><circle cx="6.5" cy="6.5" r="5.6" fill="none" stroke="#c6c6c6" stroke-width="1.3"/><rect x="5" y="5" width="3" height="3" fill="#c6c6c6"/></svg>
<div class="a t" style="left:1725.8px;top:628px;line-height:20px;height:20px;font-size:15.5px;color:#a9a9a9;letter-spacing:0.242px;">Raycast Target</div>
<div class="a" style="left:1876px;top:629px;width:17px;height:17.5px;background:#222222;border:1px solid #191919;border-radius:3px;"></div>
<svg class="a" style="left:1878.5px;top:632.5px;" width="12" height="11" viewBox="0 0 12 11"><path d="M1.2 5.6 L4.6 9 L10.8 1.6" fill="none" stroke="#d6d6d6" stroke-width="2"/></svg>
<svg class="a" style="left:1711px;top:657.5px;" width="9" height="10.5" viewBox="0 0 9 10.5"><polygon points="0,0 9,5.25 0,10.5" fill="#5e5e5e"/></svg>
<div class="a t" style="left:1725.8px;top:653px;line-height:20px;height:20px;font-size:15.5px;color:#a9a9a9;letter-spacing:0.021px;">Raycast Padding</div>
<div class="a t" style="left:1725.8px;top:681px;line-height:20px;height:20px;font-size:15.5px;color:#a9a9a9;letter-spacing:0.045px;">Maskable</div>
<div class="a" style="left:1876px;top:682px;width:17px;height:17.5px;background:#222222;border:1px solid #191919;border-radius:3px;"></div>
<svg class="a" style="left:1878.5px;top:685.5px;" width="12" height="11" viewBox="0 0 12 11"><path d="M1.2 5.6 L4.6 9 L10.8 1.6" fill="none" stroke="#d6d6d6" stroke-width="2"/></svg>
<div class="a t" style="left:1728.4px;top:706px;line-height:20px;height:20px;font-size:15.5px;color:#a9a9a9;letter-spacing:0.178px;">Image Type</div>
<div class="a" style="left:1881px;top:705px;width:13.5px;height:21px;background:#444444;border-radius:3px;"></div>
<svg class="a" style="left:1878.5px;top:711.5px;" width="7" height="6" viewBox="0 0 7 6"><polygon points="0,0 7,0 5.4,5 " fill="#a9a9a9" transform="translate(0,0)"/></svg>
<div class="a t" style="left:1747.5px;top:731px;line-height:20px;height:20px;font-size:15.5px;color:#a9a9a9;letter-spacing:0.069px;">Fill Center</div>
<div class="a" style="left:1880px;top:731px;width:17px;height:17.5px;background:#222222;border:1px solid #191919;border-radius:3px;"></div>
<svg class="a" style="left:1882.5px;top:734.5px;" width="12" height="11" viewBox="0 0 12 11"><path d="M1.2 5.6 L4.6 9 L10.8 1.6" fill="none" stroke="#d6d6d6" stroke-width="2"/></svg>
<div class="a t" style="left:1747.5px;top:756px;line-height:20px;height:20px;font-size:15.5px;color:#a9a9a9;letter-spacing:0.142px;width:128.5px;overflow:hidden;-webkit-mask-image:linear-gradient(90deg,#000 95%,transparent);mask-image:linear-gradient(90deg,#000 95%,transparent);">Pixels Per Unit Multiplier</div>
<div class="a" style="left:1880px;top:754px;width:15.5px;height:22.5px;background:#222222;border:1px solid #191919;border-radius:3.5px;"></div>
<div class="a t" style="left:1884px;top:756px;line-height:20px;height:20px;font-size:15.5px;color:#b4b4b4;">1</div>
<div class="a" style="left:1701px;top:788px;width:203px;height:1px;background:#1c1c1c;"></div>
<div class="a" style="left:1701px;top:789px;width:203px;height:26px;background:#353535;"></div>
<svg class="a" style="left:1708.6px;top:798px;" width="10.5" height="9" viewBox="0 0 10.5 9"><polygon points="0,0 10.5,0 5.25,9" fill="#5e5e5e"/></svg>
<svg class="a" style="left:1728px;top:794.5px;" width="16" height="16" viewBox="0 0 16 16"><circle cx="7.7" cy="7.5" r="6.9" fill="none" stroke="#a9a9a9" stroke-width="1.2"/><circle cx="7.7" cy="7.5" r="4.8" fill="#a9a9a9"/></svg>
<div class="a" style="left:1751px;top:793px;width:17px;height:17.5px;background:#222222;border:1px solid #191919;border-radius:3px;"></div>
<svg class="a" style="left:1753.5px;top:796.5px;" width="12" height="11" viewBox="0 0 12 11"><path d="M1.2 5.6 L4.6 9 L10.8 1.6" fill="none" stroke="#d6d6d6" stroke-width="2"/></svg>
<div class="a t" style="left:1776.5px;top:792px;line-height:20px;height:20px;font-size:15.5px;color:#c6c6c6;letter-spacing:-0.320px;font-weight:700;width:47px;overflow:hidden;">Button</div>
<svg class="a" style="left:1831.5px;top:795.5px;" width="13" height="13" viewBox="0 0 13 13"><circle cx="6.5" cy="6.5" r="6.3" fill="#a9a9a9"/></svg>
<div class="a t" style="left:1835px;top:795px;line-height:14px;height:14px;font-size:11.5px;color:#353535;font-weight:700;">?</div>
<svg class="a" style="left:1857px;top:796px;" width="13" height="12" viewBox="0 0 13 12"><path d="M0.3 3 H6 M10 3 H12.5 M0.3 9 H1.6 M5.6 9 H12.5" stroke="#a9a9a9" stroke-width="1.3"/><path d="M8.6 0.2 V5.8 M3.6 6.2 V11.8" stroke="#a9a9a9" stroke-width="2"/></svg>
<svg class="a" style="left:1886.5px;top:795.0px;" width="3" height="14" viewBox="0 0 3 14"><circle cx="1.5" cy="1.9" r="1.45" fill="#c4c4c4"/><circle cx="1.5" cy="7" r="1.45" fill="#c4c4c4"/><circle cx="1.5" cy="12.1" r="1.45" fill="#c4c4c4"/></svg>
<div class="a t" style="left:1725.4px;top:823px;line-height:20px;height:20px;font-size:15.5px;color:#a9a9a9;letter-spacing:0.250px;">Interactable</div>
<div class="a" style="left:1876px;top:824px;width:17px;height:17.5px;background:#222222;border:1px solid #191919;border-radius:3px;"></div>
<svg class="a" style="left:1878.5px;top:827.5px;" width="12" height="11" viewBox="0 0 12 11"><path d="M1.2 5.6 L4.6 9 L10.8 1.6" fill="none" stroke="#d6d6d6" stroke-width="2"/></svg>
<div class="a t" style="left:1725.4px;top:848px;line-height:20px;height:20px;font-size:15.5px;color:#a9a9a9;letter-spacing:0.252px;">Transition</div>
<div class="a" style="left:1877px;top:847px;width:21.5px;height:21px;background:#444444;border-radius:4px;box-shadow:0 1px 0 #232323;"></div>
<svg class="a" style="left:1882px;top:854px;" width="9" height="6" viewBox="0 0 9 6"><polygon points="0,0 9,0 4.5,5.4" fill="#a9a9a9"/></svg>
<div class="a t" style="left:1743.6px;top:872.5px;line-height:20px;height:20px;font-size:15.5px;color:#a9a9a9;letter-spacing:0.273px;">Target Graphic</div>
<div class="a" style="left:1870px;top:871.0px;width:28.5px;height:22px;background:#2a2a2a;border:1px solid #1d1d1d;border-radius:4px;clip-path:inset(-2px -2px -2px 6px);"></div>
<svg class="a" style="left:1879.5px;top:876.0px;" width="13" height="13" viewBox="0 0 13 13"><circle cx="6.5" cy="6.5" r="5.6" fill="none" stroke="#c6c6c6" stroke-width="1.3"/><rect x="5" y="5" width="3" height="3" fill="#c6c6c6"/></svg>
<div class="a t" style="left:1743.6px;top:897.5px;line-height:20px;height:20px;font-size:15.5px;color:#a9a9a9;letter-spacing:0.099px;">Normal Color</div>
<div class="a" style="left:1875px;top:897.0px;width:2.2px;height:20px;background:#ffffff;"></div>
<div class="a" style="left:1870px;top:896.0px;width:28.5px;height:22px;background:#2a2a2a;border:1px solid #1d1d1d;border-radius:4px;clip-path:inset(-2px -2px -2px 7.2px);"></div>
<svg class="a" style="left:1881px;top:900.0px;" width="14" height="15" viewBox="0 0 14 15"><path d="M1 14 L2 11 L7.6 5.4 L9.6 7.4 L4 13 Z" fill="#a9a9a9"/><path d="M6.6 3.4 L11.6 8.4" stroke="#a9a9a9" stroke-width="2"/><path d="M9 5.8 L11.6 3.2" stroke="#a9a9a9" stroke-width="3.4" stroke-linecap="round"/></svg>
<div class="a t" style="left:1743.6px;top:922.5px;line-height:20px;height:20px;font-size:15.5px;color:#a9a9a9;letter-spacing:0.211px;">Highlighted Color</div>
<div class="a" style="left:1875px;top:922.0px;width:2.2px;height:20px;background:#ffffff;"></div>
<div class="a" style="left:1870px;top:921.0px;width:28.5px;height:22px;background:#2a2a2a;border:1px solid #1d1d1d;border-radius:4px;clip-path:inset(-2px -2px -2px 7.2px);"></div>
<svg class="a" style="left:1881px;top:925.0px;" width="14" height="15" viewBox="0 0 14 15"><path d="M1 14 L2 11 L7.6 5.4 L9.6 7.4 L4 13 Z" fill="#a9a9a9"/><path d="M6.6 3.4 L11.6 8.4" stroke="#a9a9a9" stroke-width="2"/><path d="M9 5.8 L11.6 3.2" stroke="#a9a9a9" stroke-width="3.4" stroke-linecap="round"/></svg>
<div class="a t" style="left:1743.6px;top:947.5px;line-height:20px;height:20px;font-size:15.5px;color:#a9a9a9;letter-spacing:0.060px;">Pressed Color</div>
<div class="a" style="left:1875px;top:947.0px;width:2.2px;height:20px;background:#c8c8c8;"></div>
<div class="a" style="left:1870px;top:946.0px;width:28.5px;height:22px;background:#2a2a2a;border:1px solid #1d1d1d;border-radius:4px;clip-path:inset(-2px -2px -2px 7.2px);"></div>
<svg class="a" style="left:1881px;top:950.0px;" width="14" height="15" viewBox="0 0 14 15"><path d="M1 14 L2 11 L7.6 5.4 L9.6 7.4 L4 13 Z" fill="#a9a9a9"/><path d="M6.6 3.4 L11.6 8.4" stroke="#a9a9a9" stroke-width="2"/><path d="M9 5.8 L11.6 3.2" stroke="#a9a9a9" stroke-width="3.4" stroke-linecap="round"/></svg>
<div class="a t" style="left:1743.6px;top:972.5px;line-height:20px;height:20px;font-size:15.5px;color:#a9a9a9;letter-spacing:0.131px;">Selected Color</div>
<div class="a" style="left:1875px;top:972.0px;width:2.2px;height:20px;background:#ffffff;"></div>
<div class="a" style="left:1870px;top:971.0px;width:28.5px;height:22px;background:#2a2a2a;border:1px solid #1d1d1d;border-radius:4px;clip-path:inset(-2px -2px -2px 7.2px);"></div>
<svg class="a" style="left:1881px;top:975.0px;" width="14" height="15" viewBox="0 0 14 15"><path d="M1 14 L2 11 L7.6 5.4 L9.6 7.4 L4 13 Z" fill="#a9a9a9"/><path d="M6.6 3.4 L11.6 8.4" stroke="#a9a9a9" stroke-width="2"/><path d="M9 5.8 L11.6 3.2" stroke="#a9a9a9" stroke-width="3.4" stroke-linecap="round"/></svg>
<div class="a" style="left:1699px;top:99px;width:2px;height:885px;background:#111111;"></div>
<div class="a" style="left:0px;top:661px;width:1699px;height:2px;background:#111111;"></div>
<div class="a" style="left:0px;top:663px;width:118px;height:30px;background:#303030;border-radius:4px 4px 0 0;"></div>
<svg class="a" style="left:11px;top:672px;" width="15.0" height="13.0" viewBox="0 0 15 13"><path d="M0.2 1.4 Q0.2 0.2 1.4 0.2 H5.4 L7 2.4 H13.6 Q14.8 2.4 14.8 3.6 V11.6 Q14.8 12.8 13.6 12.8 H1.4 Q0.2 12.8 0.2 11.6 Z" fill="#a9a9a9"/></svg>
<div class="a t" style="left:31px;top:669px;line-height:20px;height:20px;font-size:15.5px;color:#a9a9a9;letter-spacing:0.250px;">Project</div>
<svg class="a" style="left:132px;top:671px;" width="13" height="14" viewBox="0 0 13 14"><rect x="0.7" y="0.7" width="11.6" height="12.6" fill="none" stroke="#c4c4c4" stroke-width="1.4"/><path d="M2.4 3.6 H10.6 M2.4 6 H10.6 M2.4 8.4 H10.6 M2.4 10.8 H10.6" stroke="#c4c4c4" stroke-width="1.3"/></svg>
<div class="a t" style="left:150px;top:669px;line-height:20px;height:20px;font-size:15.5px;color:#a9a9a9;letter-spacing:0.161px;">Console</div>
<svg class="a" style="left:258px;top:672px;" width="14" height="12" viewBox="0 0 14 12"><path d="M0.6 10.8 L5.4 5.6 L0.6 0.8 M5.4 5.6 H12.6 M9.8 2.8 L12.8 5.6 L9.8 8.4" fill="none" stroke="#c4c4c4" stroke-width="1.4"/></svg>
<div class="a t" style="left:276px;top:669px;line-height:20px;height:20px;font-size:15.5px;color:#a9a9a9;letter-spacing:0.246px;">Animator</div>
<svg class="a" style="left:1655px;top:672px;" width="12" height="12" viewBox="0 0 12 12"><path d="M3.2 5.5 V3.4 Q3.2 0.8 6.2 0.8 Q9.2 0.8 9.2 3.4" fill="none" stroke="#c4c4c4" stroke-width="1.15"/><rect x="0.7" y="6.2" width="10" height="5" fill="none" stroke="#c4c4c4" stroke-width="1.15"/></svg>
<svg class="a" style="left:1680.5px;top:671.5px;" width="3" height="14" viewBox="0 0 3 14"><circle cx="1.5" cy="1.9" r="1.45" fill="#c4c4c4"/><circle cx="1.5" cy="7" r="1.45" fill="#c4c4c4"/><circle cx="1.5" cy="12.1" r="1.45" fill="#c4c4c4"/></svg>
<div class="a" style="left:0px;top:693px;width:1699px;height:25px;background:#303030;"></div>
<div class="a" style="left:0px;top:718px;width:1699px;height:1px;background:#1c1c1c;"></div>
<svg class="a" style="left:8px;top:698px;" width="30" height="16" viewBox="0 0 30 16"><path d="M8 0.5 V15.5 M0.5 8 H15.5" stroke="#c4c4c4" stroke-width="1.6"/><polygon points="21,5.4 30,5.4 25.5,10.2" fill="#a9a9a9"/></svg>
<div class="a" style="left:1117px;top:696px;width:397px;height:20px;background:#222222;border:1px solid #191919;border-radius:4px;"></div>
<svg class="a" style="left:1122px;top:701px;" width="11" height="11" viewBox="0 0 11 11"><circle cx="4" cy="4" r="2.8" fill="none" stroke="#c4c4c4" stroke-width="1.3"/><path d="M6.1 6.1 L9.6 9.6" stroke="#c4c4c4" stroke-width="1.6"/></svg>
<div class="a" style="left:1492px;top:697px;width:21px;height:18px;background:#363636;border-radius:0 4px 4px 0;"></div>
<svg class="a" style="left:1495px;top:698.5px;" width="15" height="15" viewBox="0 0 15 15"><path d="M4 4 V1 H14 V11 H11" fill="none" stroke="#a9a9a9" stroke-width="1.2"/><rect x="0.8" y="8" width="6" height="6" fill="none" stroke="#a9a9a9" stroke-width="1.2"/><path d="M6 9 L11.4 3.6 M7.6 3.4 H11.6 V7.4" fill="none" stroke="#a9a9a9" stroke-width="1.2"/></svg>
<div class="a" style="left:1516.5px;top:694px;width:1px;height:23px;background:#262626;"></div>
<div class="a" style="left:1550px;top:694px;width:1px;height:23px;background:#262626;"></div>
<div class="a" style="left:1582px;top:694px;width:1px;height:23px;background:#262626;"></div>
<div class="a" style="left:1614.5px;top:694px;width:1px;height:23px;background:#262626;"></div>
<div class="a" style="left:1647px;top:694px;width:1px;height:23px;background:#262626;"></div>
<svg class="a" style="left:1524px;top:697px;" width="17" height="17" viewBox="0 0 17 17"><rect x="3.4" y="0.6" width="6" height="6" fill="#a9a9a9"/><circle cx="4.6" cy="11.6" r="4.4" fill="#a9a9a9"/><polygon points="11.6,3.6 16.4,12 8.4,10" fill="#a9a9a9"/></svg>
<svg class="a" style="left:1556px;top:698px;" width="16" height="15" viewBox="0 0 16 15"><path d="M8.4 1.2 H14 V6.8 L6.8 14 L1.2 8.4 Z" fill="#a9a9a9" transform="rotate(0)"/><circle cx="11.4" cy="3.9" r="1.2" fill="#303030"/></svg>
<svg class="a" style="left:1588px;top:697px;" width="17" height="17" viewBox="0 0 17 17"><circle cx="8.5" cy="8.5" r="8" fill="#adadad"/><rect x="7.3" y="3.4" width="2.4" height="6.6" fill="#303030"/><rect x="7.3" y="11.4" width="2.4" height="2.4" fill="#303030"/></svg>
<svg class="a" style="left:1622px;top:697.5px;" width="16.5" height="16.5" viewBox="0 0 16 16"><polygon points="8,0.6 10.2,5.6 15.6,6.1 11.5,9.7 12.7,15 8,12.2 3.3,15 4.5,9.7 0.4,6.1 5.8,5.6" fill="#767676"/></svg>
<svg class="a" style="left:1654px;top:700px;" width="18" height="11" viewBox="0 0 18 11"><path d="M0.6 5.5 Q9 -3.4 17.4 5.5 Q9 14.4 0.6 5.5Z" fill="#5a5a5a"/><circle cx="9" cy="5.5" r="3" fill="#444"/></svg>
<div class="a t" style="left:1674.5px;top:696px;line-height:20px;height:20px;font-size:15.5px;color:#a9a9a9;letter-spacing:0.125px;">22</div>
<div class="a" style="left:0px;top:719px;width:258px;height:265px;background:#2d2d2d;"></div>
<svg class="a" style="left:7px;top:723.5px;" width="9" height="10.5" viewBox="0 0 9 10.5"><polygon points="0,0 9,5.25 0,10.5" fill="#5e5e5e"/></svg>
<svg class="a" style="left:23px;top:720.5px;" width="14.5" height="14.5" viewBox="0 0 16 16"><polygon points="8,0.6 10.2,5.6 15.6,6.1 11.5,9.7 12.7,15 8,12.2 3.3,15 4.5,9.7 0.4,6.1 5.8,5.6" fill="#c4c4c4"/></svg>
<div class="a t" style="left:44.5px;top:718px;line-height:20px;height:20px;font-size:15.5px;color:#c4c4c4;letter-spacing:-0.102px;font-weight:700;">Favorites</div>
<div class="a" style="left:0px;top:758px;width:258px;height:20px;background:#3e3e3e;"></div>
<svg class="a" style="left:5px;top:764px;" width="10.4" height="8.6" viewBox="0 0 10.4 8.6"><polygon points="0,0 10.4,0 5.2,8.6" fill="#5e5e5e"/></svg>
<svg class="a" style="left:22.6px;top:761.5px;" width="17.0" height="13.0" viewBox="0 0 17 13"><path d="M0.7 11.6 V1.6 Q0.7 0.7 1.6 0.7 H5.2 L6.8 2.8 H12.6 Q13.4 2.8 13.4 3.7 V5" fill="none" stroke="#b8b8b8" stroke-width="1.2"/><path d="M0.8 12.4 L3.6 5.4 H16.6 L13.6 12.4 Z" fill="#b8b8b8"/></svg>
<div class="a t" style="left:44.5px;top:758px;line-height:20px;height:20px;font-size:15.5px;color:#c4c4c4;letter-spacing:0.026px;font-weight:700;">Assets</div>
<svg class="a" style="left:24.5px;top:783px;" width="9" height="10.5" viewBox="0 0 9 10.5"><polygon points="0,0 8.6,5.25 0,10.5" fill="#5e5e5e"/></svg>
<svg class="a" style="left:39.5px;top:781.5px;" width="15.0" height="13.0" viewBox="0 0 15 13"><path d="M0.2 1.4 Q0.2 0.2 1.4 0.2 H5.4 L7 2.4 H13.6 Q14.8 2.4 14.8 3.6 V11.6 Q14.8 12.8 13.6 12.8 H1.4 Q0.2 12.8 0.2 11.6 Z" fill="#adadad"/></svg>
<div class="a t" style="left:60.2px;top:778px;line-height:20px;height:20px;font-size:15.5px;color:#a9a9a9;letter-spacing:0.328px;width:196.5px;overflow:hidden;">Happy Little Trees - Free nature pack</div>
<svg class="a" style="left:24.5px;top:803px;" width="9" height="10.5" viewBox="0 0 9 10.5"><polygon points="0,0 8.6,5.25 0,10.5" fill="#5e5e5e"/></svg>
<svg class="a" style="left:39.5px;top:801.5px;" width="15.0" height="13.0" viewBox="0 0 15 13"><path d="M0.2 1.4 Q0.2 0.2 1.4 0.2 H5.4 L7 2.4 H13.6 Q14.8 2.4 14.8 3.6 V11.6 Q14.8 12.8 13.6 12.8 H1.4 Q0.2 12.8 0.2 11.6 Z" fill="#adadad"/></svg>
<div class="a t" style="left:60.2px;top:798px;line-height:20px;height:20px;font-size:15.5px;color:#a9a9a9;letter-spacing:0.103px;">LowPolyFarmLite</div>
<svg class="a" style="left:39.5px;top:821.5px;" width="15.0" height="13.0" viewBox="0 0 15 13"><path d="M0.2 1.4 Q0.2 0.2 1.4 0.2 H5.4 L7 2.4 H13.6 Q14.8 2.4 14.8 3.6 V11.6 Q14.8 12.8 13.6 12.8 H1.4 Q0.2 12.8 0.2 11.6 Z" fill="#adadad"/></svg>
<div class="a t" style="left:60.2px;top:818px;line-height:20px;height:20px;font-size:15.5px;color:#a9a9a9;letter-spacing:0.145px;">Materials</div>
<svg class="a" style="left:39.5px;top:841.5px;" width="15.0" height="13.0" viewBox="0 0 15 13"><path d="M0.7 1.6 Q0.7 0.7 1.6 0.7 H5.2 L6.8 2.8 H13.4 Q14.3 2.8 14.3 3.7 V11.4 Q14.3 12.3 13.4 12.3 H1.6 Q0.7 12.3 0.7 11.4 Z" fill="none" stroke="#adadad" stroke-width="1.2"/></svg>
<div class="a t" style="left:60.2px;top:838px;line-height:20px;height:20px;font-size:15.5px;color:#a9a9a9;letter-spacing:0.172px;">Models</div>
<svg class="a" style="left:39.5px;top:861.5px;" width="15.0" height="13.0" viewBox="0 0 15 13"><path d="M0.7 1.6 Q0.7 0.7 1.6 0.7 H5.2 L6.8 2.8 H13.4 Q14.3 2.8 14.3 3.7 V11.4 Q14.3 12.3 13.4 12.3 H1.6 Q0.7 12.3 0.7 11.4 Z" fill="none" stroke="#adadad" stroke-width="1.2"/></svg>
<div class="a t" style="left:60.2px;top:858px;line-height:20px;height:20px;font-size:15.5px;color:#a9a9a9;letter-spacing:0.062px;">Particles</div>
<svg class="a" style="left:39.5px;top:881.5px;" width="15.0" height="13.0" viewBox="0 0 15 13"><path d="M0.2 1.4 Q0.2 0.2 1.4 0.2 H5.4 L7 2.4 H13.6 Q14.8 2.4 14.8 3.6 V11.6 Q14.8 12.8 13.6 12.8 H1.4 Q0.2 12.8 0.2 11.6 Z" fill="#adadad"/></svg>
<div class="a t" style="left:60.2px;top:878px;line-height:20px;height:20px;font-size:15.5px;color:#a9a9a9;letter-spacing:0.083px;">Prefabs</div>
<svg class="a" style="left:39.5px;top:901.5px;" width="15.0" height="13.0" viewBox="0 0 15 13"><path d="M0.2 1.4 Q0.2 0.2 1.4 0.2 H5.4 L7 2.4 H13.6 Q14.8 2.4 14.8 3.6 V11.6 Q14.8 12.8 13.6 12.8 H1.4 Q0.2 12.8 0.2 11.6 Z" fill="#adadad"/></svg>
<div class="a t" style="left:60.2px;top:898px;line-height:20px;height:20px;font-size:15.5px;color:#a9a9a9;letter-spacing:-0.117px;">Scenes</div>
<svg class="a" style="left:39.5px;top:921.5px;" width="15.0" height="13.0" viewBox="0 0 15 13"><path d="M0.2 1.4 Q0.2 0.2 1.4 0.2 H5.4 L7 2.4 H13.6 Q14.8 2.4 14.8 3.6 V11.6 Q14.8 12.8 13.6 12.8 H1.4 Q0.2 12.8 0.2 11.6 Z" fill="#adadad"/></svg>
<div class="a t" style="left:60.2px;top:918px;line-height:20px;height:20px;font-size:15.5px;color:#a9a9a9;letter-spacing:0.204px;">Scripts</div>
<svg class="a" style="left:39.5px;top:941.5px;" width="15.0" height="13.0" viewBox="0 0 15 13"><path d="M0.2 1.4 Q0.2 0.2 1.4 0.2 H5.4 L7 2.4 H13.6 Q14.8 2.4 14.8 3.6 V11.6 Q14.8 12.8 13.6 12.8 H1.4 Q0.2 12.8 0.2 11.6 Z" fill="#adadad"/></svg>
<div class="a t" style="left:60.2px;top:938px;line-height:20px;height:20px;font-size:15.5px;color:#a9a9a9;letter-spacing:0.223px;">Settings</div>
<svg class="a" style="left:24.5px;top:963px;" width="9" height="10.5" viewBox="0 0 9 10.5"><polygon points="0,0 8.6,5.25 0,10.5" fill="#5e5e5e"/></svg>
<svg class="a" style="left:39.5px;top:961.5px;" width="15.0" height="13.0" viewBox="0 0 15 13"><path d="M0.2 1.4 Q0.2 0.2 1.4 0.2 H5.4 L7 2.4 H13.6 Q14.8 2.4 14.8 3.6 V11.6 Q14.8 12.8 13.6 12.8 H1.4 Q0.2 12.8 0.2 11.6 Z" fill="#adadad"/></svg>
<div class="a t" style="left:60.2px;top:958px;line-height:20px;height:20px;font-size:15.5px;color:#a9a9a9;letter-spacing:0.270px;">TextMesh Pro</div>
<svg class="a" style="left:24.5px;top:983px;" width="9" height="10.5" viewBox="0 0 9 10.5"><polygon points="0,0 8.6,5.25 0,10.5" fill="#5e5e5e"/></svg>
<svg class="a" style="left:39.5px;top:981.5px;" width="15.0" height="13.0" viewBox="0 0 15 13"><path d="M0.2 1.4 Q0.2 0.2 1.4 0.2 H5.4 L7 2.4 H13.6 Q14.8 2.4 14.8 3.6 V11.6 Q14.8 12.8 13.6 12.8 H1.4 Q0.2 12.8 0.2 11.6 Z" fill="#adadad"/></svg>
<div class="a t" style="left:60.2px;top:978px;line-height:20px;height:20px;font-size:15.5px;color:#a9a9a9;letter-spacing:0.419px;">TutorialInfo</div>
<div class="a" style="left:258px;top:719px;width:15px;height:265px;background:#2f2f2f;"></div>
<svg class="a" style="left:261.5px;top:725.5px;" width="9" height="6" viewBox="0 0 9 6"><polygon points="0,6 9,6 4.5,0.5" fill="#a9a9a9"/></svg>
<div class="a" style="left:260px;top:738.5px;width:12.5px;height:260px;background:#515151;border-radius:6px;"></div>
<div class="a" style="left:273px;top:719px;width:2px;height:265px;background:#1c1c1c;"></div>
<div class="a" style="left:275px;top:719px;width:1424px;height:26.5px;background:#333333;"></div>
<div class="a" style="left:275px;top:745.5px;width:1424px;height:239px;background:#292929;"></div>
<div class="a t" style="left:280.7px;top:721px;line-height:20px;height:20px;font-size:15.5px;color:#c4c4c4;letter-spacing:0.026px;font-weight:700;">Assets</div>
<svg class="a" style="left:305.5px;top:772.5px;" width="60" height="51" viewBox="0 0 60 51"><path d="M0 3.4 Q0 0.4 3 0.4 H24.4 L31.2 10.6 H57 Q60 10.6 60 13.6 V47.6 Q60 50.6 57 50.6 H3 Q0 50.6 0 47.6 Z" fill="#9b9b9b"/></svg>
<div class="a t" style="left:275.5px;top:839.5px;line-height:18px;height:18px;font-size:13px;color:#a2a2a2;width:120px;text-align:center;letter-spacing:0.22px;">Happy Littl...</div>
<svg class="a" style="left:405.5px;top:772.5px;" width="60" height="51" viewBox="0 0 60 51"><path d="M0 3.4 Q0 0.4 3 0.4 H24.4 L31.2 10.6 H57 Q60 10.6 60 13.6 V47.6 Q60 50.6 57 50.6 H3 Q0 50.6 0 47.6 Z" fill="#9b9b9b"/></svg>
<div class="a t" style="left:375.5px;top:839.5px;line-height:18px;height:18px;font-size:13px;color:#a2a2a2;width:120px;text-align:center;letter-spacing:0.22px;">LowPolyFar...</div>
<svg class="a" style="left:505.5px;top:772.5px;" width="60" height="51" viewBox="0 0 60 51"><path d="M0 3.4 Q0 0.4 3 0.4 H24.4 L31.2 10.6 H57 Q60 10.6 60 13.6 V47.6 Q60 50.6 57 50.6 H3 Q0 50.6 0 47.6 Z" fill="#9b9b9b"/></svg>
<div class="a t" style="left:475.5px;top:839.5px;line-height:18px;height:18px;font-size:13px;color:#a2a2a2;width:120px;text-align:center;letter-spacing:0.22px;">Materials</div>
<svg class="a" style="left:605.5px;top:772.5px;" width="60" height="51" viewBox="0 0 60 51"><path d="M2 4.4 Q2 2 4.4 2 H23 L30 12.6 H55.6 Q58 12.6 58 15 V46.6 Q58 49 55.6 49 H4.4 Q2 49 2 46.6 Z" fill="none" stroke="#9b9b9b" stroke-width="4" stroke-linejoin="round"/></svg>
<div class="a t" style="left:575.5px;top:839.5px;line-height:18px;height:18px;font-size:13px;color:#a2a2a2;width:120px;text-align:center;letter-spacing:0.22px;">Models</div>
<svg class="a" style="left:705.5px;top:772.5px;" width="60" height="51" viewBox="0 0 60 51"><path d="M2 4.4 Q2 2 4.4 2 H23 L30 12.6 H55.6 Q58 12.6 58 15 V46.6 Q58 49 55.6 49 H4.4 Q2 49 2 46.6 Z" fill="none" stroke="#9b9b9b" stroke-width="4" stroke-linejoin="round"/></svg>
<div class="a t" style="left:675.5px;top:839.5px;line-height:18px;height:18px;font-size:13px;color:#a2a2a2;width:120px;text-align:center;letter-spacing:0.22px;">Particles</div>
<svg class="a" style="left:805.5px;top:772.5px;" width="60" height="51" viewBox="0 0 60 51"><path d="M0 3.4 Q0 0.4 3 0.4 H24.4 L31.2 10.6 H57 Q60 10.6 60 13.6 V47.6 Q60 50.6 57 50.6 H3 Q0 50.6 0 47.6 Z" fill="#9b9b9b"/></svg>
<div class="a t" style="left:775.5px;top:839.5px;line-height:18px;height:18px;font-size:13px;color:#a2a2a2;width:120px;text-align:center;letter-spacing:0.22px;">Prefabs</div>
<svg class="a" style="left:905.5px;top:772.5px;" width="60" height="51" viewBox="0 0 60 51"><path d="M0 3.4 Q0 0.4 3 0.4 H24.4 L31.2 10.6 H57 Q60 10.6 60 13.6 V47.6 Q60 50.6 57 50.6 H3 Q0 50.6 0 47.6 Z" fill="#9b9b9b"/></svg>
<div class="a t" style="left:875.5px;top:839.5px;line-height:18px;height:18px;font-size:13px;color:#a2a2a2;width:120px;text-align:center;letter-spacing:0.22px;">Scenes</div>
<svg class="a" style="left:1005.5px;top:772.5px;" width="60" height="51" viewBox="0 0 60 51"><path d="M0 3.4 Q0 0.4 3 0.4 H24.4 L31.2 10.6 H57 Q60 10.6 60 13.6 V47.6 Q60 50.6 57 50.6 H3 Q0 50.6 0 47.6 Z" fill="#9b9b9b"/></svg>
<div class="a t" style="left:975.5px;top:839.5px;line-height:18px;height:18px;font-size:13px;color:#a2a2a2;width:120px;text-align:center;letter-spacing:0.22px;">Scripts</div>
<svg class="a" style="left:1105.5px;top:772.5px;" width="60" height="51" viewBox="0 0 60 51"><path d="M0 3.4 Q0 0.4 3 0.4 H24.4 L31.2 10.6 H57 Q60 10.6 60 13.6 V47.6 Q60 50.6 57 50.6 H3 Q0 50.6 0 47.6 Z" fill="#9b9b9b"/></svg>
<div class="a t" style="left:1075.5px;top:839.5px;line-height:18px;height:18px;font-size:13px;color:#a2a2a2;width:120px;text-align:center;letter-spacing:0.22px;">Settings</div>
<svg class="a" style="left:1205.5px;top:772.5px;" width="60" height="51" viewBox="0 0 60 51"><path d="M0 3.4 Q0 0.4 3 0.4 H24.4 L31.2 10.6 H57 Q60 10.6 60 13.6 V47.6 Q60 50.6 57 50.6 H3 Q0 50.6 0 47.6 Z" fill="#9b9b9b"/></svg>
<div class="a t" style="left:1175.5px;top:839.5px;line-height:18px;height:18px;font-size:13px;color:#a2a2a2;width:120px;text-align:center;letter-spacing:0.22px;">TextMesh ...</div>
<svg class="a" style="left:1305.5px;top:772.5px;" width="60" height="51" viewBox="0 0 60 51"><path d="M0 3.4 Q0 0.4 3 0.4 H24.4 L31.2 10.6 H57 Q60 10.6 60 13.6 V47.6 Q60 50.6 57 50.6 H3 Q0 50.6 0 47.6 Z" fill="#9b9b9b"/></svg>
<div class="a t" style="left:1275.5px;top:839.5px;line-height:18px;height:18px;font-size:13px;color:#a2a2a2;width:120px;text-align:center;letter-spacing:0.22px;">TutorialInfo</div>
<svg class="a" style="left:1405.5px;top:772.5px;" width="60" height="51" viewBox="0 0 60 51"><path d="M2 4.4 Q2 2 4.4 2 H23 L30 12.6 H55.6 Q58 12.6 58 15 V46.6 Q58 49 55.6 49 H4.4 Q2 49 2 46.6 Z" fill="none" stroke="#9b9b9b" stroke-width="4" stroke-linejoin="round"/></svg>
<div class="a t" style="left:1375.5px;top:839.5px;line-height:18px;height:18px;font-size:13px;color:#a2a2a2;width:120px;text-align:center;letter-spacing:0.22px;">UI</div>
<svg class="a" style="left:1500px;top:766px;" width="90" height="68" viewBox="0 0 90 68"><polygon points="0.5,8 23.5,1.5 23.5,49.5 0.5,57" fill="#d6d6d6"/><polygon points="23.5,1.5 48,9.5 48,57.5 23.5,49.5" fill="#979797"/><polygon points="48,9.5 70.5,2 70.5,50 48,57.5" fill="#cdcdcd"/><polygon points="59.5,20 44,41.5 55,40 51.5,64 68,42 58,43.5" fill="#1385b4"/><circle cx="76" cy="31" r="10" fill="#8f8f8f"/><polygon points="72.6,25.6 81.6,31 72.6,36.4" fill="#2b2b2b"/></svg>
<div class="a t" style="left:1475.5px;top:839.5px;line-height:18px;height:18px;font-size:13px;color:#a2a2a2;width:120px;text-align:center;letter-spacing:0.22px;">InputSyste...</div>
<svg class="a" style="left:1605px;top:763px;" width="62" height="71" viewBox="0 0 62 71"><path d="M5 2.5 H36.5 L58.5 24.5 V65 Q58.5 68 55.5 68 H5 Q2.5 68 2.5 65.5 V5 Q2.5 2.5 5 2.5Z" fill="#292929" stroke="#8f8f8f" stroke-width="5" stroke-linejoin="round"/><path d="M11 35 Q30 29.5 51.5 29.5 V60 H11 Z" fill="#8cc63f"/><path d="M9.5 51.5 Q26 34 53 31.5 M25 62 Q36 45 53 42" fill="none" stroke="#292929" stroke-width="4.2"/></svg>
<div class="a t" style="left:1575.5px;top:839.5px;line-height:18px;height:18px;font-size:13px;color:#a2a2a2;width:120px;text-align:center;letter-spacing:0.22px;">New Terrain</div>
<svg class="a" style="left:304px;top:879px;" width="74" height="72" viewBox="0 0 74 72"><path d="M29.5 4 L54.5 16 V47 L29.5 60.5 L4.5 47 V16 Z M4.5 16 L29.5 28.5 L54.5 16 M29.5 28.5 V60.5" fill="none" stroke="#62b1dc" stroke-width="4.4" stroke-linejoin="round"/><rect x="34" y="33" width="40" height="39" fill="#292929"/></svg>
<div class="a t" style="left:340.5px;top:906.5px;line-height:44px;height:44px;font-size:39px;color:#dc5a32;font-weight:700;letter-spacing:4px;-webkit-text-stroke:0.8px #dc5a32;">{}</div>
<div class="a t" style="left:275.5px;top:956.5px;line-height:18px;height:18px;font-size:13px;color:#a2a2a2;width:120px;text-align:center;letter-spacing:0.22px;">Readme</div>
<svg class="a" style="left:405.5px;top:879px;" width="60" height="70" viewBox="0 0 60 70"><path d="M4 0 H43 L60 17 V66 Q60 70 56 70 H4 Q0 70 0 66 V4 Q0 0 4 0Z" fill="#c8c8c8"/></svg>
<div class="a t" style="left:410px;top:884px;line-height:60px;height:60px;font-size:61px;color:#1f5a1f;font-weight:700;width:51px;text-align:center;-webkit-text-stroke:0.6px #1f5a1f;">#</div>
<div class="a t" style="left:375.5px;top:956.5px;line-height:18px;height:18px;font-size:13px;color:#a2a2a2;width:120px;text-align:center;letter-spacing:0.22px;">WateringCa...</div>
<div class="a" style="left:1699px;top:661px;width:2px;height:323px;background:#111111;"></div>
</body></html>
